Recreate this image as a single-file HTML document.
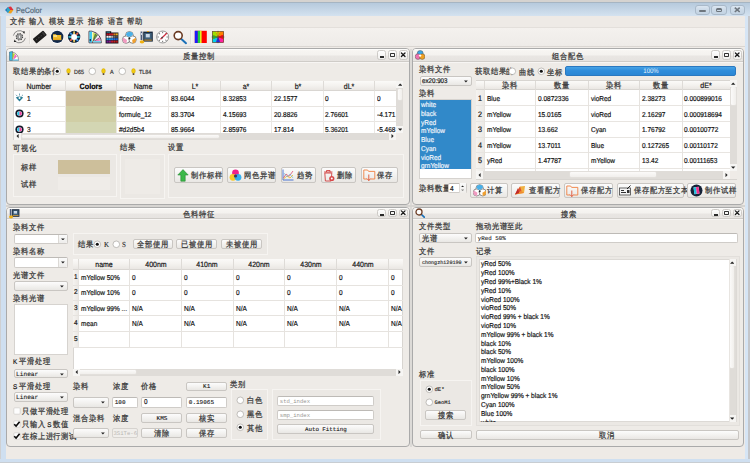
<!DOCTYPE html>
<html><head><meta charset="utf-8"><title>PeColor</title><style>
html,body{margin:0;padding:0;width:750px;height:463px;overflow:hidden;background:#eeeae6}
.a{position:absolute}
.t{white-space:nowrap;text-rendering:geometricPrecision;font-family:"Liberation Sans",sans-serif;-webkit-text-stroke:0.2px currentColor}
.c{font-size:8px;letter-spacing:0.65px;text-rendering:optimizeSpeed;-webkit-text-stroke:0.25px currentColor;color:#3a3a3a}
</style></head><body>
<div class="a " style="left:0px;top:0px;width:750px;height:463px;background:#eeeae6;"></div>
<div class="a " style="left:0px;top:0px;width:750px;height:1.5px;background:#d5d3d0;"></div>
<div class="a " style="left:0px;top:1.5px;width:750px;height:14.5px;background:linear-gradient(#b6cadd,#bfd1e2 30%,#d4e2f0);border-top:1px solid #a6b5c2;box-sizing:border-box;"></div>
<div class="a " style="left:0px;top:16px;width:1px;height:447px;background:#cfd0d2;"></div>
<div class="a " style="left:1px;top:16px;width:4.5px;height:447px;background:#cfdff0;"></div>
<div class="a " style="left:745px;top:16px;width:5px;height:447px;background:#d6e5f5;"></div>
<div class="a " style="left:748.3px;top:16px;width:1.7px;height:447px;background:#c4c6ca;"></div>
<div class="a " style="left:0px;top:459px;width:750px;height:4px;background:#cfdff0;"></div>
<div class="a " style="left:0px;top:462px;width:750px;height:1px;background:#c8cdd2;"></div>
<svg class="a" style="left:5px;top:6px" width="9" height="8" viewBox="0 0 9 8"><path d="M0 4 L3 1 L5 4 L3 7Z" fill="#1d6fb8"/><path d="M3 1 L6 0.5 L8.5 4 L5 4Z" fill="#e0303a"/><path d="M5 4 L8.5 4 L6 7.5 L3 7Z" fill="#f0a020"/><path d="M3 1 L5 4 L3 7 L1.5 4Z" fill="#2aa8c8"/></svg>
<div class="a t" style="left:15.5px;top:6.1px;line-height:10px;font-size:7.92px;color:#566a7a;transform:scaleX(0.9091);transform-origin:0 50%;">PeColor</div>
<div class="a " style="left:694.5px;top:4.8px;width:15.0px;height:10.0px;background:linear-gradient(#dbe6f1,#cbd9e7 50%,#c3d3e3);border:1px solid #a9b9c9;border-radius:3px;box-sizing:border-box;"></div>
<div class="a " style="left:711.3px;top:4.8px;width:15.4px;height:10.0px;background:linear-gradient(#dbe6f1,#cbd9e7 50%,#c3d3e3);border:1px solid #a9b9c9;border-radius:3px;box-sizing:border-box;"></div>
<div class="a " style="left:729.5px;top:4.8px;width:15.0px;height:10.0px;background:linear-gradient(#dbe6f1,#cbd9e7 50%,#c3d3e3);border:1px solid #a9b9c9;border-radius:3px;box-sizing:border-box;"></div>
<div class="a " style="left:699px;top:9.6px;width:6.5px;height:2.6px;background:#6e767e;border-radius:1.3px;"></div>
<div class="a " style="left:716px;top:7.6px;width:6.2px;height:4.8px;border:1px solid #6e767e;border-top-width:2px;box-sizing:border-box;border-radius:1.5px;"></div>
<svg class="a" style="left:733.8px;top:7.4px" width="6.5" height="5.6" viewBox="0 0 6.5 5.6"><path d="M0.8 0.6 L5.7 5 M5.7 0.6 L0.8 5" stroke="#6e767e" stroke-width="1.6"/></svg>
<div class="a " style="left:5.5px;top:16px;width:739.5px;height:10.5px;background:#eeeae6;"></div>
<div class="a t" style="left:9.5px;top:17.2px;line-height:10px;font-size:6.93px;color:#222;transform:scaleX(0.9091);transform-origin:0 50%;"><span class="c">文件</span></div>
<div class="a t" style="left:29px;top:17.2px;line-height:10px;font-size:6.93px;color:#222;transform:scaleX(0.9091);transform-origin:0 50%;"><span class="c">输入</span></div>
<div class="a t" style="left:48.5px;top:17.2px;line-height:10px;font-size:6.93px;color:#222;transform:scaleX(0.9091);transform-origin:0 50%;"><span class="c">模块</span></div>
<div class="a t" style="left:68px;top:17.2px;line-height:10px;font-size:6.93px;color:#222;transform:scaleX(0.9091);transform-origin:0 50%;"><span class="c">显示</span></div>
<div class="a t" style="left:88px;top:17.2px;line-height:10px;font-size:6.93px;color:#222;transform:scaleX(0.9091);transform-origin:0 50%;"><span class="c">指标</span></div>
<div class="a t" style="left:107.5px;top:17.2px;line-height:10px;font-size:6.93px;color:#222;transform:scaleX(0.9091);transform-origin:0 50%;"><span class="c">语言</span></div>
<div class="a t" style="left:127px;top:17.2px;line-height:10px;font-size:6.93px;color:#222;transform:scaleX(0.9091);transform-origin:0 50%;"><span class="c">帮助</span></div>
<div class="a " style="left:5.5px;top:26.5px;width:739.5px;height:20.0px;background:linear-gradient(#f4f1ee,#eeebe8);border-top:1px solid #e3dfdb;box-sizing:border-box;"></div>
<div class="a " style="left:5.5px;top:46px;width:739.5px;height:1px;background:#dad6d2;"></div>
<div class="a " style="left:5.5px;top:47px;width:739.5px;height:1px;background:#efebe7;"></div>
<svg class="a" style="left:0;top:0;overflow:hidden" width="230" height="48" viewBox="0 0 230 48"><defs><clipPath id="cw"><rect x="212.4" y="31.5" width="11.2" height="11"/></clipPath></defs><rect x="29" y="30" width="0.8" height="14" fill="#d6d2ce"/><rect x="29.8" y="30" width="0.8" height="14" fill="#fbfaf8"/><rect x="190.5" y="30" width="0.8" height="14" fill="#d6d2ce"/><rect x="191.3" y="30" width="0.8" height="14" fill="#fbfaf8"/><path d="M23.8 32.4 A6.2 6.2 0 0 0 13.4 35.6" fill="none" stroke="#707070" stroke-width="0.8"/><path d="M15 41.1 A6.2 6.2 0 0 0 25.4 37.9" fill="none" stroke="#707070" stroke-width="0.8"/><path d="M22.6 31.4 L25 31.6 L24.2 33.9Z" fill="#222"/><path d="M16.2 42.1 L13.8 41.9 L14.6 39.6Z" fill="#222"/><circle cx="19.4" cy="36.8" r="3.2" fill="#8a8a8a" stroke="#3a3a3a" stroke-width="1.1" stroke-dasharray="1.1 1.4"/><circle cx="19.4" cy="36.8" r="2.6" fill="#9a9a9a"/><rect x="19" y="35.6" width="1" height="2.4" fill="#e8e8e8"/><g transform="rotate(-40 39.8 37)"><rect x="33" y="34" width="13.6" height="6" rx="0.9" fill="#1e1e1e"/><rect x="35" y="36.6" width="1.2" height="0.8" fill="#555"/><rect x="38" y="36.6" width="1.2" height="0.8" fill="#555"/><rect x="41" y="36.6" width="1.2" height="0.8" fill="#555"/><rect x="44" y="35" width="1.6" height="4" fill="#3a3a3a"/></g><circle cx="57.2" cy="36.9" r="6.9" fill="#fff" opacity="0.85"/><circle cx="57.2" cy="36.9" r="6.2" fill="#13294a"/><path d="M53 34.2h2.8l0.8 0.9h4.6v5h-8.2z" fill="#f2bd2c"/><rect x="53.4" y="35.4" width="3.6" height="1.2" fill="#fff4c0"/><rect x="53" y="38.6" width="8.2" height="1.5" fill="#e8a820"/><circle cx="74.1" cy="36.9" r="6.9" fill="#fff" opacity="0.85"/><circle cx="74.1" cy="36.9" r="6.2" fill="#0f2540"/><path d="M73.1 33.9 L75.1 33.9 L74.8 31.2 L73.4 31.2Z" fill="#e8c860" transform="rotate(0 74.1 36.9)"/><path d="M73.1 33.9 L75.1 33.9 L74.8 31.2 L73.4 31.2Z" fill="#e86048" transform="rotate(45 74.1 36.9)"/><path d="M73.1 33.9 L75.1 33.9 L74.8 31.2 L73.4 31.2Z" fill="#40c8d8" transform="rotate(90 74.1 36.9)"/><path d="M73.1 33.9 L75.1 33.9 L74.8 31.2 L73.4 31.2Z" fill="#3a90e0" transform="rotate(135 74.1 36.9)"/><path d="M73.1 33.9 L75.1 33.9 L74.8 31.2 L73.4 31.2Z" fill="#e8c860" transform="rotate(180 74.1 36.9)"/><path d="M73.1 33.9 L75.1 33.9 L74.8 31.2 L73.4 31.2Z" fill="#e86048" transform="rotate(225 74.1 36.9)"/><path d="M73.1 33.9 L75.1 33.9 L74.8 31.2 L73.4 31.2Z" fill="#40c8d8" transform="rotate(270 74.1 36.9)"/><path d="M73.1 33.9 L75.1 33.9 L74.8 31.2 L73.4 31.2Z" fill="#3a90e0" transform="rotate(315 74.1 36.9)"/><circle cx="74.1" cy="36.9" r="3.0" fill="#fff"/><path d="M89 31.2 H92.2 L92.4 31.5 A11 11 0 0 1 101.3 42.8 H89Z" fill="#fff" stroke="#3a3040" stroke-width="0.9"/><rect x="89.4" y="31.6" width="2.6" height="10.8" fill="#40c8ee"/><rect x="89.6" y="39" width="1.4" height="2.2" fill="#1a3050"/><path d="M92.6 42.3 L92.6 32.2 L95.4 33.4Z" fill="#d8e860"/><path d="M92.6 42.3 L95.4 33.4 L97.6 35Z" fill="#60a030"/><path d="M92.6 42.3 L97.6 35 L99.5 37.6Z" fill="#f4f0f4"/><path d="M92.6 42.3 L99.5 37.6 L100.7 40.6Z" fill="#f080c0"/><path d="M92.6 42.3 L95.4 33.4 M92.6 42.3 L97.6 35 M92.6 42.3 L99.5 37.6" stroke="#2a2030" stroke-width="0.5"/><rect x="93" y="41" width="7.8" height="1.4" fill="#70d4f0"/><path d="M105.6 31.2h5.6v1.2h7.2v11.2h-12.8z" fill="#141420"/><rect x="106.6" y="31.8" width="3.4" height="0.8" fill="#30a0b0"/><rect x="106.5" y="33.4" width="2.1" height="2" fill="#c0141e"/><rect x="108.8" y="33.4" width="2.1" height="2" fill="#d01828"/><rect x="111.1" y="33.4" width="2.1" height="2" fill="#d8201e"/><rect x="113.4" y="33.4" width="2.1" height="2" fill="#e07a18"/><rect x="115.7" y="33.4" width="2.1" height="2" fill="#e8b020"/><rect x="106.5" y="35.8" width="2.1" height="2" fill="#f4f4f4"/><rect x="108.8" y="35.8" width="2.1" height="2" fill="#e8e8e8"/><rect x="111.1" y="35.8" width="2.1" height="2" fill="#b0b0b0"/><rect x="113.4" y="35.8" width="2.1" height="2" fill="#707070"/><rect x="115.7" y="35.8" width="2.1" height="2" fill="#505050"/><rect x="106.5" y="38.199999999999996" width="2.1" height="2" fill="#18a0d8"/><rect x="108.8" y="38.199999999999996" width="2.1" height="2" fill="#1890e0"/><rect x="111.1" y="38.199999999999996" width="2.1" height="2" fill="#2080e8"/><rect x="113.4" y="38.199999999999996" width="2.1" height="2" fill="#2070e0"/><rect x="115.7" y="38.199999999999996" width="2.1" height="2" fill="#1a60d0"/><rect x="106.5" y="40.599999999999994" width="2.1" height="2" fill="#701890"/><rect x="108.8" y="40.599999999999994" width="2.1" height="2" fill="#8a1a80"/><rect x="111.1" y="40.599999999999994" width="2.1" height="2" fill="#c01830"/><rect x="113.4" y="40.599999999999994" width="2.1" height="2" fill="#c82020"/><rect x="115.7" y="40.599999999999994" width="2.1" height="2" fill="#b01818"/><circle cx="129.4" cy="35.4" r="3.9" fill="#fff" stroke="#444" stroke-width="0.6"/><circle cx="126.1" cy="39.6" r="3.7" fill="#fff" stroke="#444" stroke-width="0.6"/><circle cx="132.6" cy="39.6" r="3.7" fill="#fff" stroke="#444" stroke-width="0.6"/><path d="M125.8 34.6 A3.9 3.9 0 0 1 133.2 34.2 L131 36.6 L128 36.8Z" fill="#4ab0e8"/><path d="M123.2 37.6 A3.7 3.7 0 0 0 126.4 43.3 L127 40 Z" fill="#f09ac0"/><path d="M135.6 37.8 A3.7 3.7 0 0 1 132.6 43.3 L132.2 40Z" fill="#f0a030"/><circle cx="129.4" cy="38.6" r="1" fill="#222"/><rect x="143.2" y="31.6" width="9.6" height="10" fill="#18283c"/><rect x="144.2" y="33" width="7.6" height="6.4" fill="#40607a"/><rect x="145.8" y="34" width="4" height="3.4" fill="#c8d8e8"/><rect x="144.2" y="39.6" width="7.6" height="1" fill="#d8a040"/><rect x="147" y="31" width="2" height="1" fill="#e0a020"/><rect x="140.6" y="31.5" width="1.8" height="8.5" fill="#4a5a7a"/><rect x="141" y="33" width="1" height="2" fill="#c8d8e8"/><ellipse cx="142" cy="41.8" rx="2.3" ry="1.6" fill="#f0b010"/><circle cx="162.7" cy="37" r="6" fill="#fff" stroke="#9a9a9a" stroke-width="1"/><rect x="162.3" y="31.8" width="0.8" height="1.4" fill="#555" transform="rotate(0 162.7 37)"/><rect x="162.3" y="31.8" width="0.8" height="1.4" fill="#555" transform="rotate(45 162.7 37)"/><rect x="162.3" y="31.8" width="0.8" height="1.4" fill="#555" transform="rotate(90 162.7 37)"/><rect x="162.3" y="31.8" width="0.8" height="1.4" fill="#555" transform="rotate(135 162.7 37)"/><rect x="162.3" y="31.8" width="0.8" height="1.4" fill="#555" transform="rotate(180 162.7 37)"/><rect x="162.3" y="31.8" width="0.8" height="1.4" fill="#555" transform="rotate(225 162.7 37)"/><rect x="162.3" y="31.8" width="0.8" height="1.4" fill="#555" transform="rotate(270 162.7 37)"/><rect x="162.3" y="31.8" width="0.8" height="1.4" fill="#555" transform="rotate(315 162.7 37)"/><path d="M160.5 39.2 L167 33" stroke="#d03040" stroke-width="1.2"/><circle cx="162.2" cy="37.6" r="0.9" fill="#444"/><path d="M180.8 38.6 L186 43.2" stroke="#1a70b8" stroke-width="2" stroke-linecap="round"/><circle cx="178.2" cy="35.6" r="4" fill="#fff" stroke="#6a3a22" stroke-width="1.6"/><rect x="194.8" y="30.8" width="12" height="12.2" fill="#f00"/><rect x="194.8" y="30.8" width="3" height="12.2" fill="#1a1aff"/><rect x="197.8" y="30.8" width="2.2" height="12.2" fill="#20d040"/><rect x="200" y="30.8" width="1.6" height="12.2" fill="#e0f020"/><rect x="212.4" y="31.5" width="11.2" height="11" fill="#e00"/><path clip-path="url(#cw)" d="M218 37 L213.41 25.91 L222.59 25.91Z" fill="#f0e000"/><path clip-path="url(#cw)" d="M218 37 L222.59 25.91 L229.09 32.41Z" fill="#ff8000"/><path clip-path="url(#cw)" d="M218 37 L229.09 32.41 L229.09 41.59Z" fill="#ff1010"/><path clip-path="url(#cw)" d="M218 37 L229.09 41.59 L222.59 48.09Z" fill="#ff20a0"/><path clip-path="url(#cw)" d="M218 37 L222.59 48.09 L213.41 48.09Z" fill="#2030ff"/><path clip-path="url(#cw)" d="M218 37 L213.41 48.09 L206.91 41.59Z" fill="#00d0f0"/><path clip-path="url(#cw)" d="M218 37 L206.91 41.59 L206.91 32.41Z" fill="#30d030"/><path clip-path="url(#cw)" d="M218 37 L206.91 32.41 L213.41 25.91Z" fill="#a0e000"/><rect x="212.4" y="31.5" width="11.2" height="11" fill="none" stroke="#553" stroke-width="0.6"/><path d="M211.6 37 H224.4 M218 30.8 V43.2" stroke="#333" stroke-width="0.5"/></svg>
<div class="a " style="left:410.3px;top:48.5px;width:1.5px;height:398.0px;background:#dcdad7;"></div>
<div class="a " style="left:6px;top:205.1px;width:738.5px;height:1.9px;background:#d6d4d1;"></div>
<div class="a " style="left:5.5px;top:48px;width:404.8px;height:157.1px;border:1px solid #aaaaaa;border-radius:4px;box-sizing:border-box;background:#eeebe7;"></div>
<div class="a " style="left:6.5px;top:49px;width:402.8px;height:12.8px;background:linear-gradient(#ffffff,#f7f5f2 12%,#f4f2ef 45%,#e9e6e3 55%,#e6e3e0);border-radius:3px 3px 0 0;"></div>
<div class="a " style="left:6.5px;top:61.0px;width:402.8px;height:1.0px;background:#cfccc8;"></div>
<div class="a " style="left:6.5px;top:62.0px;width:402.8px;height:1.0px;background:#f7f5f3;"></div>
<div class="a t" style="left:49px;width:300px;text-align:center;top:52.0px;line-height:10px;font-size:6.93px;color:#222;transform:scaleX(0.9091);transform-origin:50% 50%;"><span class="c">质量控制</span></div>
<div class="a " style="left:376.7px;top:49.5px;width:9.4px;height:10.3px;background:linear-gradient(#fdfdfd,#f1f0ee);border:1px solid #cdcac6;border-radius:2.5px;box-sizing:border-box;"></div>
<div class="a " style="left:387.6px;top:49.5px;width:9.4px;height:10.3px;background:linear-gradient(#fdfdfd,#f1f0ee);border:1px solid #cdcac6;border-radius:2.5px;box-sizing:border-box;"></div>
<div class="a " style="left:398.5px;top:49.5px;width:9.4px;height:10.3px;background:linear-gradient(#fdfdfd,#f1f0ee);border:1px solid #cdcac6;border-radius:2.5px;box-sizing:border-box;"></div>
<div class="a " style="left:379.6px;top:56.35px;width:4.1px;height:1.5px;background:#2a2a2a;"></div>
<div class="a " style="left:389.8px;top:53.05px;width:5.0px;height:3.8px;border:1px solid #333;border-top-width:1.9px;box-sizing:border-box;border-radius:0.8px;"></div>
<svg class="a" style="left:400px;top:52px" width="6" height="6" viewBox="0 0 6 6"><path d="M1.40 0.95L5.00 4.55M5.00 0.95L1.40 4.55" stroke="#1a1a1a" stroke-width="1.3" stroke-linecap="round"/></svg>
<div class="a " style="left:411.8px;top:48px;width:332.5px;height:157.1px;border:1px solid #aaaaaa;border-radius:4px;box-sizing:border-box;background:#eeebe7;"></div>
<div class="a " style="left:412.8px;top:49px;width:330.5px;height:12.8px;background:linear-gradient(#ffffff,#f7f5f2 12%,#f4f2ef 45%,#e9e6e3 55%,#e6e3e0);border-radius:3px 3px 0 0;"></div>
<div class="a " style="left:412.8px;top:61.0px;width:330.5px;height:1.0px;background:#cfccc8;"></div>
<div class="a " style="left:412.8px;top:62.0px;width:330.5px;height:1.0px;background:#f7f5f3;"></div>
<div class="a t" style="left:418.3px;width:300px;text-align:center;top:52.0px;line-height:10px;font-size:6.93px;color:#222;transform:scaleX(0.9091);transform-origin:50% 50%;"><span class="c">组合配色</span></div>
<div class="a " style="left:710.7px;top:49.5px;width:9.4px;height:10.3px;background:linear-gradient(#fdfdfd,#f1f0ee);border:1px solid #cdcac6;border-radius:2.5px;box-sizing:border-box;"></div>
<div class="a " style="left:721.6px;top:49.5px;width:9.4px;height:10.3px;background:linear-gradient(#fdfdfd,#f1f0ee);border:1px solid #cdcac6;border-radius:2.5px;box-sizing:border-box;"></div>
<div class="a " style="left:732.5px;top:49.5px;width:9.4px;height:10.3px;background:linear-gradient(#fdfdfd,#f1f0ee);border:1px solid #cdcac6;border-radius:2.5px;box-sizing:border-box;"></div>
<div class="a " style="left:713.6px;top:56.35px;width:4.1px;height:1.5px;background:#2a2a2a;"></div>
<div class="a " style="left:723.8px;top:53.05px;width:5.0px;height:3.8px;border:1px solid #333;border-top-width:1.9px;box-sizing:border-box;border-radius:0.8px;"></div>
<svg class="a" style="left:734px;top:52px" width="6" height="6" viewBox="0 0 6 6"><path d="M1.40 0.95L5.00 4.55M5.00 0.95L1.40 4.55" stroke="#1a1a1a" stroke-width="1.3" stroke-linecap="round"/></svg>
<div class="a " style="left:5.5px;top:207px;width:404.8px;height:240px;border:1px solid #aaaaaa;border-radius:4px;box-sizing:border-box;background:#eeebe7;"></div>
<div class="a " style="left:6.5px;top:208px;width:402.8px;height:10.6px;background:linear-gradient(#ffffff,#f7f5f2 12%,#f4f2ef 45%,#e9e6e3 55%,#e6e3e0);border-radius:3px 3px 0 0;"></div>
<div class="a " style="left:6.5px;top:217.8px;width:402.8px;height:1.0px;background:#cfccc8;"></div>
<div class="a " style="left:6.5px;top:218.8px;width:402.8px;height:1.0px;background:#f7f5f3;"></div>
<div class="a t" style="left:48.5px;width:300px;text-align:center;top:209.9px;line-height:10px;font-size:6.93px;color:#222;transform:scaleX(0.9091);transform-origin:50% 50%;"><span class="c">色料特征</span></div>
<div class="a " style="left:376.7px;top:208.5px;width:9.4px;height:8.1px;background:linear-gradient(#fdfdfd,#f1f0ee);border:1px solid #cdcac6;border-radius:2.5px;box-sizing:border-box;"></div>
<div class="a " style="left:387.6px;top:208.5px;width:9.4px;height:8.1px;background:linear-gradient(#fdfdfd,#f1f0ee);border:1px solid #cdcac6;border-radius:2.5px;box-sizing:border-box;"></div>
<div class="a " style="left:398.5px;top:208.5px;width:9.4px;height:8.1px;background:linear-gradient(#fdfdfd,#f1f0ee);border:1px solid #cdcac6;border-radius:2.5px;box-sizing:border-box;"></div>
<div class="a " style="left:379.6px;top:214.25px;width:4.1px;height:1.5px;background:#2a2a2a;"></div>
<div class="a " style="left:389.8px;top:210.95px;width:5.0px;height:3.8px;border:1px solid #333;border-top-width:1.9px;box-sizing:border-box;border-radius:0.8px;"></div>
<svg class="a" style="left:400px;top:210px" width="6" height="6" viewBox="0 0 6 6"><path d="M1.40 0.85L5.00 4.45M5.00 0.85L1.40 4.45" stroke="#1a1a1a" stroke-width="1.3" stroke-linecap="round"/></svg>
<div class="a " style="left:411.8px;top:207px;width:332.5px;height:240px;border:1px solid #aaaaaa;border-radius:4px;box-sizing:border-box;background:#eeebe7;"></div>
<div class="a " style="left:412.8px;top:208px;width:330.5px;height:10.6px;background:linear-gradient(#ffffff,#f7f5f2 12%,#f4f2ef 45%,#e9e6e3 55%,#e6e3e0);border-radius:3px 3px 0 0;"></div>
<div class="a " style="left:412.8px;top:217.8px;width:330.5px;height:1.0px;background:#cfccc8;"></div>
<div class="a " style="left:412.8px;top:218.8px;width:330.5px;height:1.0px;background:#f7f5f3;"></div>
<div class="a t" style="left:419px;width:300px;text-align:center;top:209.9px;line-height:10px;font-size:6.93px;color:#222;transform:scaleX(0.9091);transform-origin:50% 50%;"><span class="c">搜索</span></div>
<div class="a " style="left:710.7px;top:208.5px;width:9.4px;height:8.1px;background:linear-gradient(#fdfdfd,#f1f0ee);border:1px solid #cdcac6;border-radius:2.5px;box-sizing:border-box;"></div>
<div class="a " style="left:721.6px;top:208.5px;width:9.4px;height:8.1px;background:linear-gradient(#fdfdfd,#f1f0ee);border:1px solid #cdcac6;border-radius:2.5px;box-sizing:border-box;"></div>
<div class="a " style="left:732.5px;top:208.5px;width:9.4px;height:8.1px;background:linear-gradient(#fdfdfd,#f1f0ee);border:1px solid #cdcac6;border-radius:2.5px;box-sizing:border-box;"></div>
<div class="a " style="left:713.6px;top:214.25px;width:4.1px;height:1.5px;background:#2a2a2a;"></div>
<div class="a " style="left:723.8px;top:210.95px;width:5.0px;height:3.8px;border:1px solid #333;border-top-width:1.9px;box-sizing:border-box;border-radius:0.8px;"></div>
<svg class="a" style="left:734px;top:210px" width="6" height="6" viewBox="0 0 6 6"><path d="M1.40 0.85L5.00 4.45M5.00 0.85L1.40 4.45" stroke="#1a1a1a" stroke-width="1.3" stroke-linecap="round"/></svg>
<div class="a t" style="left:13px;top:67.4px;line-height:10px;font-size:6.93px;color:#151515;transform:scaleX(0.9091);transform-origin:0 50%;"><span class="c">取结果的条件</span></div>
<svg class="a" style="left:52.7px;top:67.3px" width="8.6" height="8.6" viewBox="0 0 8.6 8.6"><defs><linearGradient id="rg" x1="0" y1="0" x2="0" y2="1"><stop offset="0" stop-color="#e8e8e8"/><stop offset="1" stop-color="#ffffff"/></linearGradient></defs><circle cx="4.3" cy="4.3" r="3.3" fill="#fff" stroke="#a9a6a2" stroke-width="0.7"/><circle cx="4.3" cy="4.3" r="1.55" fill="#111"/></svg>
<svg class="a" style="left:65.8px;top:68.0px" width="5" height="8" viewBox="0 0 5 8"><ellipse cx="2.5" cy="3" rx="1.9" ry="2.4" fill="#f2cc10" stroke="#c89a10" stroke-width="0.4"/><rect x="1.7" y="5.2" width="1.6" height="1.8" fill="#5a4a30"/></svg>
<div class="a t" style="left:74px;top:67.7px;line-height:10px;font-size:5.94px;color:#333;transform:scaleX(0.9091);transform-origin:0 50%;">D65</div>
<svg class="a" style="left:87.9px;top:67.3px" width="8.6" height="8.6" viewBox="0 0 8.6 8.6"><defs><linearGradient id="rg" x1="0" y1="0" x2="0" y2="1"><stop offset="0" stop-color="#e8e8e8"/><stop offset="1" stop-color="#ffffff"/></linearGradient></defs><circle cx="4.3" cy="4.3" r="3.3" fill="#fff" stroke="#a9a6a2" stroke-width="0.7"/></svg>
<svg class="a" style="left:100.8px;top:68.0px" width="5" height="8" viewBox="0 0 5 8"><ellipse cx="2.5" cy="3" rx="1.9" ry="2.4" fill="#f2cc10" stroke="#c89a10" stroke-width="0.4"/><rect x="1.7" y="5.2" width="1.6" height="1.8" fill="#5a4a30"/></svg>
<div class="a t" style="left:109.8px;top:67.7px;line-height:10px;font-size:5.94px;color:#333;transform:scaleX(0.9091);transform-origin:0 50%;">A</div>
<svg class="a" style="left:117.7px;top:67.3px" width="8.6" height="8.6" viewBox="0 0 8.6 8.6"><defs><linearGradient id="rg" x1="0" y1="0" x2="0" y2="1"><stop offset="0" stop-color="#e8e8e8"/><stop offset="1" stop-color="#ffffff"/></linearGradient></defs><circle cx="4.3" cy="4.3" r="3.3" fill="#fff" stroke="#a9a6a2" stroke-width="0.7"/></svg>
<svg class="a" style="left:130.8px;top:68.0px" width="5" height="8" viewBox="0 0 5 8"><ellipse cx="2.5" cy="3" rx="1.9" ry="2.4" fill="#f2cc10" stroke="#c89a10" stroke-width="0.4"/><rect x="1.7" y="5.2" width="1.6" height="1.8" fill="#5a4a30"/></svg>
<div class="a t" style="left:139px;top:67.7px;line-height:10px;font-size:5.94px;color:#333;transform:scaleX(0.9091);transform-origin:0 50%;">TL84</div>
<div class="a " style="left:13.4px;top:80.5px;width:390.1px;height:59.5px;background:#fff;border:1px solid #d8d5d1;box-sizing:border-box;"></div>
<div class="a " style="left:13.9px;top:81.0px;width:382.5px;height:9.5px;background:linear-gradient(#fbfaf8,#f4f2ef 50%,#eae7e3);border-bottom:1px solid #d9d6d2;box-sizing:border-box;"></div>
<div class="a " style="left:64.8px;top:81.0px;width:0.8px;height:9.5px;background:#dedbd7;"></div>
<div class="a " style="left:116.0px;top:81.0px;width:0.8px;height:9.5px;background:#dedbd7;"></div>
<div class="a " style="left:168.2px;top:81.0px;width:0.8px;height:9.5px;background:#dedbd7;"></div>
<div class="a " style="left:220.2px;top:81.0px;width:0.8px;height:9.5px;background:#dedbd7;"></div>
<div class="a " style="left:271.4px;top:81.0px;width:0.8px;height:9.5px;background:#dedbd7;"></div>
<div class="a " style="left:322.8px;top:81.0px;width:0.8px;height:9.5px;background:#dedbd7;"></div>
<div class="a " style="left:374.3px;top:81.0px;width:0.8px;height:9.5px;background:#dedbd7;"></div>
<div class="a t" style="left:-110.65px;width:300px;text-align:center;top:81.5px;line-height:10px;font-size:7.7px;color:#1a1a1a;transform:scaleX(0.9091);transform-origin:50% 50%;">Number</div>
<div class="a t" style="left:-59.1px;width:300px;text-align:center;top:81.5px;line-height:10px;font-size:7.92px;color:#000;font-weight:bold;transform:scaleX(0.9091);transform-origin:50% 50%;">Colors</div>
<div class="a t" style="left:-7.4px;width:300px;text-align:center;top:81.5px;line-height:10px;font-size:7.7px;color:#1a1a1a;transform:scaleX(0.9091);transform-origin:50% 50%;">Name</div>
<div class="a t" style="left:44.7px;width:300px;text-align:center;top:81.5px;line-height:10px;font-size:7.7px;color:#1a1a1a;transform:scaleX(0.9091);transform-origin:50% 50%;">L*</div>
<div class="a t" style="left:96.3px;width:300px;text-align:center;top:81.5px;line-height:10px;font-size:7.7px;color:#1a1a1a;transform:scaleX(0.9091);transform-origin:50% 50%;">a*</div>
<div class="a t" style="left:147.6px;width:300px;text-align:center;top:81.5px;line-height:10px;font-size:7.7px;color:#1a1a1a;transform:scaleX(0.9091);transform-origin:50% 50%;">b*</div>
<div class="a t" style="left:199.05px;width:300px;text-align:center;top:81.5px;line-height:10px;font-size:7.7px;color:#1a1a1a;transform:scaleX(0.9091);transform-origin:50% 50%;">dL*</div>
<div class="a " style="left:13.9px;top:105.6px;width:382.5px;height:0.8px;background:#e8e5e1;"></div>
<div class="a " style="left:13.9px;top:121.2px;width:382.5px;height:0.8px;background:#e8e5e1;"></div>
<div class="a " style="left:64.8px;top:90.5px;width:0.8px;height:42.8px;background:#ebe8e4;"></div>
<div class="a " style="left:116.0px;top:90.5px;width:0.8px;height:42.8px;background:#ebe8e4;"></div>
<div class="a " style="left:168.2px;top:90.5px;width:0.8px;height:42.8px;background:#ebe8e4;"></div>
<div class="a " style="left:220.2px;top:90.5px;width:0.8px;height:42.8px;background:#ebe8e4;"></div>
<div class="a " style="left:271.4px;top:90.5px;width:0.8px;height:42.8px;background:#ebe8e4;"></div>
<div class="a " style="left:322.8px;top:90.5px;width:0.8px;height:42.8px;background:#ebe8e4;"></div>
<div class="a " style="left:374.3px;top:90.5px;width:0.8px;height:42.8px;background:#ebe8e4;"></div>
<div class="a " style="left:65.8px;top:90.5px;width:50.7px;height:15.7px;background:#cdbf9b;"></div>
<div class="a t" style="left:27px;top:94.15px;line-height:10px;font-size:7.26px;color:#151515;transform:scaleX(0.9091);transform-origin:0 50%;">1</div>
<div class="a t" style="left:118.7px;top:94.15px;line-height:10px;font-size:7.15px;color:#151515;transform:scaleX(0.9091);transform-origin:0 50%;">#cec09c</div>
<div class="a t" style="left:170.8px;top:94.15px;line-height:10px;font-size:7.15px;color:#151515;transform:scaleX(0.9091);transform-origin:0 50%;">83.6044</div>
<div class="a t" style="left:222.8px;top:94.15px;line-height:10px;font-size:7.15px;color:#151515;transform:scaleX(0.9091);transform-origin:0 50%;">8.32853</div>
<div class="a t" style="left:274.0px;top:94.15px;line-height:10px;font-size:7.15px;color:#151515;transform:scaleX(0.9091);transform-origin:0 50%;">22.1577</div>
<div class="a t" style="left:325.4px;top:94.15px;line-height:10px;font-size:7.15px;color:#151515;transform:scaleX(0.9091);transform-origin:0 50%;">0</div>
<div class="a t" style="left:376.9px;top:94.15px;width:21.56px;overflow:hidden;line-height:10px;font-size:7.15px;color:#151515;transform:scaleX(0.9091);transform-origin:0 50%;">0</div>
<div class="a " style="left:65.8px;top:106.2px;width:50.7px;height:15.6px;background:#d0cea5;"></div>
<div class="a t" style="left:27px;top:109.7px;line-height:10px;font-size:7.26px;color:#151515;transform:scaleX(0.9091);transform-origin:0 50%;">2</div>
<div class="a t" style="left:118.7px;top:109.7px;line-height:10px;font-size:7.15px;color:#151515;transform:scaleX(0.9091);transform-origin:0 50%;">formule_12</div>
<div class="a t" style="left:170.8px;top:109.7px;line-height:10px;font-size:7.15px;color:#151515;transform:scaleX(0.9091);transform-origin:0 50%;">83.3704</div>
<div class="a t" style="left:222.8px;top:109.7px;line-height:10px;font-size:7.15px;color:#151515;transform:scaleX(0.9091);transform-origin:0 50%;">4.15693</div>
<div class="a t" style="left:274.0px;top:109.7px;line-height:10px;font-size:7.15px;color:#151515;transform:scaleX(0.9091);transform-origin:0 50%;">20.8826</div>
<div class="a t" style="left:325.4px;top:109.7px;line-height:10px;font-size:7.15px;color:#151515;transform:scaleX(0.9091);transform-origin:0 50%;">2.76601</div>
<div class="a t" style="left:376.9px;top:109.7px;width:21.56px;overflow:hidden;line-height:10px;font-size:7.15px;color:#151515;transform:scaleX(0.9091);transform-origin:0 50%;">-4.171</div>
<div class="a " style="left:65.8px;top:121.8px;width:50.7px;height:11.5px;background:#d3d6b3;"></div>
<div class="a t" style="left:27px;top:125.3px;line-height:10px;font-size:7.26px;color:#151515;transform:scaleX(0.9091);transform-origin:0 50%;">3</div>
<div class="a t" style="left:118.7px;top:125.3px;line-height:10px;font-size:7.15px;color:#151515;transform:scaleX(0.9091);transform-origin:0 50%;">#d2d5b4</div>
<div class="a t" style="left:170.8px;top:125.3px;line-height:10px;font-size:7.15px;color:#151515;transform:scaleX(0.9091);transform-origin:0 50%;">85.9664</div>
<div class="a t" style="left:222.8px;top:125.3px;line-height:10px;font-size:7.15px;color:#151515;transform:scaleX(0.9091);transform-origin:0 50%;">2.85976</div>
<div class="a t" style="left:274.0px;top:125.3px;line-height:10px;font-size:7.15px;color:#151515;transform:scaleX(0.9091);transform-origin:0 50%;">17.814</div>
<div class="a t" style="left:325.4px;top:125.3px;line-height:10px;font-size:7.15px;color:#151515;transform:scaleX(0.9091);transform-origin:0 50%;">5.36201</div>
<div class="a t" style="left:376.9px;top:125.3px;width:21.56px;overflow:hidden;line-height:10px;font-size:7.15px;color:#151515;transform:scaleX(0.9091);transform-origin:0 50%;">-5.468</div>
<svg class="a" style="left:15px;top:93px" width="9" height="10" viewBox="0 0 9 10"><path d="M4.5 0.5 V2.5 M1 1.8 L2.4 3.2 M8 1.8 L6.6 3.2" stroke="#3a7a90" stroke-width="0.7"/><path d="M0.8 4.6 Q4.5 2.4 8.2 4.6 L4.5 8.6Z" fill="#2a7d96"/><circle cx="4.5" cy="4.9" r="1" fill="#fff"/></svg>
<svg class="a" style="left:15px;top:109.3px" width="9" height="9" viewBox="0 0 9 9"><circle cx="4.5" cy="4.5" r="4.1" fill="#151b2a"/><path d="M2.2 3 Q4.5 1.4 6.8 3 L6.8 6 Q4.5 7.6 2.2 6Z" fill="#fff"/><path d="M2.4 3.2 L4.5 2.4 L4.5 6.6 L2.4 5.8Z" fill="#20c8e8"/><path d="M4.5 2.4 L6.6 3.2 L6.6 5.8 L4.5 6.6Z" fill="#f040a0"/></svg>
<svg class="a" style="left:15px;top:124.9px" width="9" height="9" viewBox="0 0 9 9"><circle cx="4.5" cy="4.5" r="4.1" fill="#151b2a"/><path d="M2.2 3 Q4.5 1.4 6.8 3 L6.8 6 Q4.5 7.6 2.2 6Z" fill="#fff"/><path d="M2.4 3.2 L4.5 2.4 L4.5 6.6 L2.4 5.8Z" fill="#20c8e8"/><path d="M4.5 2.4 L6.6 3.2 L6.6 5.8 L4.5 6.6Z" fill="#f040a0"/></svg>
<div class="a " style="left:396.4px;top:80.5px;width:6.9px;height:52.8px;background:#dfdcd8;"></div>
<div class="a " style="left:396.7px;top:87.5px;width:6.3px;height:13.5px;background:linear-gradient(90deg,#fbfaf9,#f1efec);border:1px solid #e2dfdb;border-radius:2px;box-sizing:border-box;"></div>
<div class="a " style="left:396.4px;top:80.5px;width:6.9px;height:7.0px;background:#f6f5f3;"></div>
<div class="a " style="left:396.4px;top:126.3px;width:6.9px;height:7.0px;background:#f6f5f3;"></div>
<svg class="a" style="left:397.65px;top:82.5px" width="4.4" height="3.2" viewBox="0 0 4.4 3.2"><path d="M0 2.7 L4.4 2.7 L2.2 0.5Z" fill="#222"/></svg>
<svg class="a" style="left:397.65px;top:128.1px" width="4.4" height="3.2" viewBox="0 0 4.4 3.2"><path d="M0 0.5 L4.4 0.5 L2.2 2.7Z" fill="#222"/></svg>
<div class="a " style="left:13.9px;top:133.3px;width:382.5px;height:6.3px;background:#dfdcd8;"></div>
<div class="a " style="left:20.5px;top:133.6px;width:199.1px;height:5.7px;background:linear-gradient(#fbfaf9,#f1efec);border:1px solid #e2dfdb;border-radius:2px;box-sizing:border-box;"></div>
<div class="a " style="left:13.9px;top:133.3px;width:7.0px;height:6.3px;background:#f6f5f3;"></div>
<div class="a " style="left:389.4px;top:133.3px;width:7.0px;height:6.3px;background:#f6f5f3;"></div>
<svg class="a" style="left:15.95px;top:134.35px" width="3.1" height="4.2" viewBox="0 0 3.1 4.2"><path d="M2.6 0 L2.6 4.2 L0.5 2.1Z" fill="#222"/></svg>
<svg class="a" style="left:391.25px;top:134.35px" width="3.1" height="4.2" viewBox="0 0 3.1 4.2"><path d="M0.5 0 L0.5 4.2 L2.6 2.1Z" fill="#222"/></svg>
<div class="a " style="left:396.4px;top:133.3px;width:6.9px;height:6.3px;background:#efebe7;"></div>
<div class="a t" style="left:13px;top:144.3px;line-height:10px;font-size:6.93px;color:#151515;transform:scaleX(0.9091);transform-origin:0 50%;"><span class="c">可视化</span></div>
<div class="a " style="left:13px;top:154px;width:104px;height:42.7px;background:#ebe8e4;border:1px solid #f6f4f1;box-sizing:border-box;"></div>
<div class="a t" style="left:20.5px;top:163.2px;line-height:10px;font-size:6.93px;color:#151515;transform:scaleX(0.9091);transform-origin:0 50%;"><span class="c">标样</span></div>
<div class="a t" style="left:20.5px;top:179.9px;line-height:10px;font-size:6.93px;color:#151515;transform:scaleX(0.9091);transform-origin:0 50%;"><span class="c">试样</span></div>
<div class="a " style="left:58px;top:160px;width:52.3px;height:14px;background:#cdbf9b;"></div>
<div class="a " style="left:58px;top:176.5px;width:52.3px;height:13.5px;background:#efece8;"></div>
<div class="a t" style="left:119.5px;top:143.4px;line-height:10px;font-size:6.93px;color:#151515;transform:scaleX(0.9091);transform-origin:0 50%;"><span class="c">结果</span></div>
<div class="a " style="left:119.5px;top:153.5px;width:45.5px;height:45.5px;background:#ebe8e4;border:1px solid #f6f4f1;box-sizing:border-box;"></div>
<div class="a " style="left:125px;top:159px;width:35px;height:35px;background:#eeebe7;"></div>
<div class="a t" style="left:167.5px;top:143.4px;line-height:10px;font-size:6.93px;color:#151515;transform:scaleX(0.9091);transform-origin:0 50%;"><span class="c">设置</span></div>
<div class="a " style="left:167.8px;top:153.9px;width:236.2px;height:44.1px;background:#ebe8e4;border:1px solid #f6f4f1;box-sizing:border-box;"></div>
<div class="a " style="left:174.2px;top:167.4px;width:49.1px;height:15.6px;background:linear-gradient(#fcfcfc,#f3f2f0 50%,#e9e7e4);border:1px solid #c9c6c2;border-radius:2px;box-sizing:border-box;"></div>
<div class="a t" style="left:190.8px;top:171.3px;line-height:10px;font-size:6.93px;color:#151515;transform:scaleX(0.9091);transform-origin:0 50%;"><span class="c">制作标样</span></div>
<div class="a " style="left:227.2px;top:167.4px;width:48.9px;height:15.6px;background:linear-gradient(#fcfcfc,#f3f2f0 50%,#e9e7e4);border:1px solid #c9c6c2;border-radius:2px;box-sizing:border-box;"></div>
<div class="a t" style="left:243.8px;top:171.3px;line-height:10px;font-size:6.93px;color:#151515;transform:scaleX(0.9091);transform-origin:0 50%;"><span class="c">网色异谱</span></div>
<div class="a " style="left:280.5px;top:167.4px;width:35.9px;height:15.6px;background:linear-gradient(#fcfcfc,#f3f2f0 50%,#e9e7e4);border:1px solid #c9c6c2;border-radius:2px;box-sizing:border-box;"></div>
<div class="a t" style="left:297.1px;top:171.3px;line-height:10px;font-size:6.93px;color:#151515;transform:scaleX(0.9091);transform-origin:0 50%;"><span class="c">趋势</span></div>
<div class="a " style="left:320.7px;top:167.4px;width:35.6px;height:15.6px;background:linear-gradient(#fcfcfc,#f3f2f0 50%,#e9e7e4);border:1px solid #c9c6c2;border-radius:2px;box-sizing:border-box;"></div>
<div class="a t" style="left:337.3px;top:171.3px;line-height:10px;font-size:6.93px;color:#151515;transform:scaleX(0.9091);transform-origin:0 50%;"><span class="c">删除</span></div>
<div class="a " style="left:360.6px;top:167.4px;width:37.2px;height:15.6px;background:linear-gradient(#fcfcfc,#f3f2f0 50%,#e9e7e4);border:1px solid #c9c6c2;border-radius:2px;box-sizing:border-box;"></div>
<div class="a t" style="left:377.2px;top:171.3px;line-height:10px;font-size:6.93px;color:#151515;transform:scaleX(0.9091);transform-origin:0 50%;"><span class="c">保存</span></div>
<svg class="a" style="left:176.5px;top:168.5px" width="12" height="13" viewBox="0 0 12 13"><path d="M6 0.6 L11.2 6 L8.2 6 L8.2 12.2 L3.8 12.2 L3.8 6 L0.8 6Z" fill="#3cb84a" stroke="#2a8a34" stroke-width="0.6"/></svg>
<svg class="a" style="left:228.7px;top:168.5px" width="13" height="13" viewBox="0 0 13 13"><circle cx="6.5" cy="4" r="3.4" fill="#f0208a"/><circle cx="4" cy="8.3" r="3.4" fill="#f8c820" opacity="0.95"/><circle cx="9" cy="8.3" r="3.4" fill="#20a8f0" opacity="0.9"/><circle cx="6.5" cy="7" r="1.6" fill="#3a3a5a"/></svg>
<svg class="a" style="left:282px;top:168.8px" width="12" height="12" viewBox="0 0 12 12"><path d="M1 0.5 V11 H11.5" stroke="#3a6ad0" stroke-width="0.9" fill="none"/><path d="M1.5 9 L4 5 L7 7.5 L11 2" stroke="#e04a6a" stroke-width="0.8" fill="none"/><path d="M1.5 10 L5 7 L8 9 L11 6" stroke="#f0c030" stroke-width="0.9" fill="none"/><path d="M2 4 L5 8 L8 5 L11 9" stroke="#60b0e0" stroke-width="0.6" fill="none"/></svg>
<svg class="a" style="left:322.5px;top:168.5px" width="12" height="13" viewBox="0 0 12 13"><path d="M1 3 H9.5 M3.5 3 V1.5 H7 V3" stroke="#d04040" stroke-width="0.9" fill="none"/><path d="M1.8 4 H8.8 L8.2 12 H2.4Z" fill="none" stroke="#d04040" stroke-width="0.9"/><circle cx="8.8" cy="9.5" r="2.6" fill="#d84848"/><circle cx="8.8" cy="9.5" r="1" fill="#fff"/></svg>
<svg class="a" style="left:362.5px;top:168.8px" width="13" height="12" viewBox="0 0 13 12"><path d="M0.8 1 H4.6 L5.6 2.4 H11.8 V10 H7.5" fill="none" stroke="#f08040" stroke-width="0.9"/><path d="M0.8 1 V10 H4" fill="none" stroke="#f08040" stroke-width="0.9"/><path d="M5.8 5.5 V11.5 M4 9.6 L5.8 11.6 L7.6 9.6" stroke="#e05030" stroke-width="0.9" fill="none"/></svg>
<svg class="a" style="left:9px;top:50.5px" width="10" height="10" viewBox="0 0 10 10"><path d="M0.5 9.5 V1 L3.5 0.5 L3.5 9.5Z" fill="#35c0e0" stroke="#2a5070" stroke-width="0.5"/><path d="M3.5 9.5 V1 A8.5 8.5 0 0 1 9.5 9.5Z" fill="#fff" stroke="#444" stroke-width="0.5"/><path d="M3.6 9.4 L3.8 2 L6 3Z" fill="#b0e030"/><path d="M3.6 9.4 L6 3 L8 5.5Z" fill="#f070c0"/><rect x="3.5" y="8.4" width="6" height="1.2" fill="#60c8f0"/></svg>
<svg class="a" style="left:414.8px;top:50.4px" width="10" height="10" viewBox="0 0 10 10"><circle cx="5.2" cy="3.5" r="3" fill="#3aa8e8" stroke="#555" stroke-width="0.5"/><circle cx="3" cy="6.6" r="2.8" fill="#f070b0" stroke="#555" stroke-width="0.5"/><circle cx="7.2" cy="6.6" r="2.8" fill="#f0a020" stroke="#555" stroke-width="0.5"/><circle cx="5.1" cy="5.6" r="1.2" fill="#fff"/></svg>
<div class="a t" style="left:419px;top:65.2px;line-height:10px;font-size:6.93px;color:#151515;transform:scaleX(0.9091);transform-origin:0 50%;"><span class="c">染料文件</span></div>
<div class="a " style="left:419.5px;top:75.7px;width:52.2px;height:10.7px;background:linear-gradient(#fcfcfc,#f3f2f0 50%,#e9e7e4);border:1px solid #c9c6c2;border-radius:2px;box-sizing:border-box;"></div>
<svg class="a" style="left:463.8px;top:79.9px" width="3.8" height="2.9" viewBox="0 0 3.8 2.9"><path d="M0 0.5 L3.8 0.5 L1.9 2.4Z" fill="#222"/></svg>
<div class="a t" style="left:422.0px;top:76.95px;line-height:10px;font-size:6.82px;color:#202020;transform:scaleX(0.9091);transform-origin:0 50%;">ex20:903</div>
<div class="a t" style="left:419px;top:88.9px;line-height:10px;font-size:6.93px;color:#151515;transform:scaleX(0.9091);transform-origin:0 50%;"><span class="c">染料</span></div>
<div class="a " style="left:418.8px;top:99.2px;width:53.0px;height:79.8px;background:#fff;border:1px solid #d6d3cf;box-sizing:border-box;"></div>
<div class="a " style="left:419.6px;top:99.8px;width:51.4px;height:69.2px;background:#3189c9;"></div>
<div class="a t" style="left:421.3px;top:100.0px;line-height:10px;font-size:7.15px;color:#eef4fa;transform:scaleX(0.9091);transform-origin:0 50%;">white</div>
<div class="a t" style="left:421.3px;top:108.75px;line-height:10px;font-size:7.15px;color:#eef4fa;transform:scaleX(0.9091);transform-origin:0 50%;">black</div>
<div class="a t" style="left:421.3px;top:117.5px;line-height:10px;font-size:7.15px;color:#eef4fa;transform:scaleX(0.9091);transform-origin:0 50%;">yRed</div>
<div class="a t" style="left:421.3px;top:126.25px;line-height:10px;font-size:7.15px;color:#eef4fa;transform:scaleX(0.9091);transform-origin:0 50%;">mYellow</div>
<div class="a t" style="left:421.3px;top:135.0px;line-height:10px;font-size:7.15px;color:#eef4fa;transform:scaleX(0.9091);transform-origin:0 50%;">Blue</div>
<div class="a t" style="left:421.3px;top:143.75px;line-height:10px;font-size:7.15px;color:#eef4fa;transform:scaleX(0.9091);transform-origin:0 50%;">Cyan</div>
<div class="a t" style="left:421.3px;top:152.5px;line-height:10px;font-size:7.15px;color:#eef4fa;transform:scaleX(0.9091);transform-origin:0 50%;">vioRed</div>
<div class="a t" style="left:421.3px;top:161.25px;line-height:10px;font-size:7.15px;color:#eef4fa;transform:scaleX(0.9091);transform-origin:0 50%;">grnYellow</div>
<div class="a t" style="left:475px;top:67.4px;line-height:10px;font-size:6.93px;color:#151515;transform:scaleX(0.9091);transform-origin:0 50%;"><span class="c">获取结果的</span></div>
<svg class="a" style="left:508.3px;top:67.3px" width="8.6" height="8.6" viewBox="0 0 8.6 8.6"><defs><linearGradient id="rg" x1="0" y1="0" x2="0" y2="1"><stop offset="0" stop-color="#e8e8e8"/><stop offset="1" stop-color="#ffffff"/></linearGradient></defs><circle cx="4.3" cy="4.3" r="3.3" fill="#fff" stroke="#a9a6a2" stroke-width="0.7"/></svg>
<div class="a t" style="left:519px;top:67.5px;line-height:10px;font-size:6.93px;color:#151515;transform:scaleX(0.9091);transform-origin:0 50%;"><span class="c">曲线</span></div>
<svg class="a" style="left:536.9px;top:67.3px" width="8.6" height="8.6" viewBox="0 0 8.6 8.6"><defs><linearGradient id="rg" x1="0" y1="0" x2="0" y2="1"><stop offset="0" stop-color="#e8e8e8"/><stop offset="1" stop-color="#ffffff"/></linearGradient></defs><circle cx="4.3" cy="4.3" r="3.3" fill="#fff" stroke="#a9a6a2" stroke-width="0.7"/><circle cx="4.3" cy="4.3" r="1.55" fill="#111"/></svg>
<div class="a t" style="left:546.5px;top:67.5px;line-height:10px;font-size:6.93px;color:#151515;transform:scaleX(0.9091);transform-origin:0 50%;"><span class="c">坐标</span></div>
<div class="a " style="left:565.3px;top:66.3px;width:171.2px;height:10.0px;background:linear-gradient(#47a3e6,#2f8ddb 45%,#2a86d4);border:1px solid #2a78c0;border-radius:2px;box-sizing:border-box;"></div>
<div class="a t" style="left:500.9px;width:300px;text-align:center;top:67.3px;line-height:10px;font-size:6.6px;color:#e8f2fb;transform:scaleX(0.9091);transform-origin:50% 50%;-webkit-text-stroke:0">100%</div>
<div class="a " style="left:475.5px;top:80px;width:261.5px;height:99.5px;background:#fff;border:1px solid #d8d5d1;box-sizing:border-box;"></div>
<div class="a " style="left:476px;top:80.5px;width:253.7px;height:9.8px;background:linear-gradient(#fbfaf8,#f4f2ef 50%,#eae7e3);border-bottom:1px solid #d9d6d2;box-sizing:border-box;"></div>
<div class="a " style="left:484.2px;top:80.5px;width:0.8px;height:9.8px;background:#dedbd7;"></div>
<div class="a " style="left:535.0px;top:80.5px;width:0.8px;height:9.8px;background:#dedbd7;"></div>
<div class="a " style="left:588.2px;top:80.5px;width:0.8px;height:9.8px;background:#dedbd7;"></div>
<div class="a " style="left:638.9px;top:80.5px;width:0.8px;height:9.8px;background:#dedbd7;"></div>
<div class="a " style="left:681.5px;top:80.5px;width:0.8px;height:9.8px;background:#dedbd7;"></div>
<div class="a t" style="left:360.1px;width:300px;text-align:center;top:81.3px;line-height:10px;font-size:7.7px;color:#151515;transform:scaleX(0.9091);transform-origin:50% 50%;"><span class="c">染料</span></div>
<div class="a t" style="left:412.1px;width:300px;text-align:center;top:81.3px;line-height:10px;font-size:7.7px;color:#151515;transform:scaleX(0.9091);transform-origin:50% 50%;"><span class="c">数量</span></div>
<div class="a t" style="left:464.05px;width:300px;text-align:center;top:81.3px;line-height:10px;font-size:7.7px;color:#151515;transform:scaleX(0.9091);transform-origin:50% 50%;"><span class="c">染料</span></div>
<div class="a t" style="left:510.7px;width:300px;text-align:center;top:81.3px;line-height:10px;font-size:7.7px;color:#151515;transform:scaleX(0.9091);transform-origin:50% 50%;"><span class="c">数量</span></div>
<div class="a t" style="left:555.85px;width:300px;text-align:center;top:81.3px;line-height:10px;font-size:7.7px;color:#151515;transform:scaleX(0.9091);transform-origin:50% 50%;">dE*</div>
<div class="a " style="left:476px;top:90.3px;width:8.7px;height:80.7px;background:linear-gradient(90deg,#f5f3f0,#ebe8e4);"></div>
<div class="a " style="left:476px;top:105.4px;width:253.7px;height:0.8px;background:#e8e5e1;"></div>
<div class="a " style="left:476px;top:121.0px;width:253.7px;height:0.8px;background:#e8e5e1;"></div>
<div class="a " style="left:476px;top:136.5px;width:253.7px;height:0.8px;background:#e8e5e1;"></div>
<div class="a " style="left:476px;top:152.0px;width:253.7px;height:0.8px;background:#e8e5e1;"></div>
<div class="a " style="left:476px;top:167.6px;width:253.7px;height:0.8px;background:#e8e5e1;"></div>
<div class="a " style="left:484.2px;top:90.3px;width:0.8px;height:80.7px;background:#e6e3df;"></div>
<div class="a " style="left:535.0px;top:90.3px;width:0.8px;height:80.7px;background:#e6e3df;"></div>
<div class="a " style="left:588.2px;top:90.3px;width:0.8px;height:80.7px;background:#e6e3df;"></div>
<div class="a " style="left:638.9px;top:90.3px;width:0.8px;height:80.7px;background:#e6e3df;"></div>
<div class="a " style="left:681.5px;top:90.3px;width:0.8px;height:80.7px;background:#e6e3df;"></div>
<div class="a t" style="left:330.1px;width:300px;text-align:center;top:93.95px;line-height:10px;font-size:7.92px;color:#151515;transform:scaleX(0.9091);transform-origin:50% 50%;">1</div>
<div class="a t" style="left:487.1px;top:93.95px;line-height:10px;font-size:7.15px;color:#151515;transform:scaleX(0.9091);transform-origin:0 50%;">Blue</div>
<div class="a t" style="left:537.9px;top:93.95px;line-height:10px;font-size:7.15px;color:#151515;transform:scaleX(0.9091);transform-origin:0 50%;">0.0872336</div>
<div class="a t" style="left:591.1px;top:93.95px;line-height:10px;font-size:7.15px;color:#151515;transform:scaleX(0.9091);transform-origin:0 50%;">vioRed</div>
<div class="a t" style="left:641.8px;top:93.95px;line-height:10px;font-size:7.15px;color:#151515;transform:scaleX(0.9091);transform-origin:0 50%;">2.38273</div>
<div class="a t" style="left:684.4px;top:93.95px;line-height:10px;font-size:7.15px;color:#151515;transform:scaleX(0.9091);transform-origin:0 50%;">0.000899016</div>
<div class="a t" style="left:330.1px;width:300px;text-align:center;top:109.5px;line-height:10px;font-size:7.92px;color:#151515;transform:scaleX(0.9091);transform-origin:50% 50%;">2</div>
<div class="a t" style="left:487.1px;top:109.5px;line-height:10px;font-size:7.15px;color:#151515;transform:scaleX(0.9091);transform-origin:0 50%;">mYellow</div>
<div class="a t" style="left:537.9px;top:109.5px;line-height:10px;font-size:7.15px;color:#151515;transform:scaleX(0.9091);transform-origin:0 50%;">15.0165</div>
<div class="a t" style="left:591.1px;top:109.5px;line-height:10px;font-size:7.15px;color:#151515;transform:scaleX(0.9091);transform-origin:0 50%;">vioRed</div>
<div class="a t" style="left:641.8px;top:109.5px;line-height:10px;font-size:7.15px;color:#151515;transform:scaleX(0.9091);transform-origin:0 50%;">2.16297</div>
<div class="a t" style="left:684.4px;top:109.5px;line-height:10px;font-size:7.15px;color:#151515;transform:scaleX(0.9091);transform-origin:0 50%;">0.000918694</div>
<div class="a t" style="left:330.1px;width:300px;text-align:center;top:125.05px;line-height:10px;font-size:7.92px;color:#151515;transform:scaleX(0.9091);transform-origin:50% 50%;">3</div>
<div class="a t" style="left:487.1px;top:125.05px;line-height:10px;font-size:7.15px;color:#151515;transform:scaleX(0.9091);transform-origin:0 50%;">mYellow</div>
<div class="a t" style="left:537.9px;top:125.05px;line-height:10px;font-size:7.15px;color:#151515;transform:scaleX(0.9091);transform-origin:0 50%;">13.662</div>
<div class="a t" style="left:591.1px;top:125.05px;line-height:10px;font-size:7.15px;color:#151515;transform:scaleX(0.9091);transform-origin:0 50%;">Cyan</div>
<div class="a t" style="left:641.8px;top:125.05px;line-height:10px;font-size:7.15px;color:#151515;transform:scaleX(0.9091);transform-origin:0 50%;">1.76792</div>
<div class="a t" style="left:684.4px;top:125.05px;line-height:10px;font-size:7.15px;color:#151515;transform:scaleX(0.9091);transform-origin:0 50%;">0.00100772</div>
<div class="a t" style="left:330.1px;width:300px;text-align:center;top:140.55px;line-height:10px;font-size:7.92px;color:#151515;transform:scaleX(0.9091);transform-origin:50% 50%;">4</div>
<div class="a t" style="left:487.1px;top:140.55px;line-height:10px;font-size:7.15px;color:#151515;transform:scaleX(0.9091);transform-origin:0 50%;">mYellow</div>
<div class="a t" style="left:537.9px;top:140.55px;line-height:10px;font-size:7.15px;color:#151515;transform:scaleX(0.9091);transform-origin:0 50%;">13.7011</div>
<div class="a t" style="left:591.1px;top:140.55px;line-height:10px;font-size:7.15px;color:#151515;transform:scaleX(0.9091);transform-origin:0 50%;">Blue</div>
<div class="a t" style="left:641.8px;top:140.55px;line-height:10px;font-size:7.15px;color:#151515;transform:scaleX(0.9091);transform-origin:0 50%;">0.127265</div>
<div class="a t" style="left:684.4px;top:140.55px;line-height:10px;font-size:7.15px;color:#151515;transform:scaleX(0.9091);transform-origin:0 50%;">0.00110172</div>
<div class="a t" style="left:330.1px;width:300px;text-align:center;top:156.1px;line-height:10px;font-size:7.92px;color:#151515;transform:scaleX(0.9091);transform-origin:50% 50%;">5</div>
<div class="a t" style="left:487.1px;top:156.1px;line-height:10px;font-size:7.15px;color:#151515;transform:scaleX(0.9091);transform-origin:0 50%;">yRed</div>
<div class="a t" style="left:537.9px;top:156.1px;line-height:10px;font-size:7.15px;color:#151515;transform:scaleX(0.9091);transform-origin:0 50%;">1.47787</div>
<div class="a t" style="left:591.1px;top:156.1px;line-height:10px;font-size:7.15px;color:#151515;transform:scaleX(0.9091);transform-origin:0 50%;">mYellow</div>
<div class="a t" style="left:641.8px;top:156.1px;line-height:10px;font-size:7.15px;color:#151515;transform:scaleX(0.9091);transform-origin:0 50%;">13.42</div>
<div class="a t" style="left:684.4px;top:156.1px;line-height:10px;font-size:7.15px;color:#151515;transform:scaleX(0.9091);transform-origin:0 50%;">0.00111653</div>
<div class="a " style="left:729.7px;top:80px;width:7.3px;height:91px;background:#dfdcd8;"></div>
<div class="a " style="left:730.0px;top:86px;width:6.7px;height:20px;background:linear-gradient(90deg,#fbfaf9,#f1efec);border:1px solid #e2dfdb;border-radius:2px;box-sizing:border-box;"></div>
<div class="a " style="left:729.7px;top:80px;width:7.3px;height:7px;background:#f6f5f3;"></div>
<div class="a " style="left:729.7px;top:164px;width:7.3px;height:7px;background:#f6f5f3;"></div>
<svg class="a" style="left:731.15px;top:82.0px" width="4.4" height="3.2" viewBox="0 0 4.4 3.2"><path d="M0 2.7 L4.4 2.7 L2.2 0.5Z" fill="#222"/></svg>
<svg class="a" style="left:731.15px;top:165.8px" width="4.4" height="3.2" viewBox="0 0 4.4 3.2"><path d="M0 0.5 L4.4 0.5 L2.2 2.7Z" fill="#222"/></svg>
<div class="a " style="left:476px;top:171px;width:253.7px;height:7.8px;background:#dfdcd8;"></div>
<div class="a " style="left:569px;top:171.3px;width:87.6px;height:7.2px;background:linear-gradient(#fbfaf9,#f1efec);border:1px solid #e2dfdb;border-radius:2px;box-sizing:border-box;"></div>
<div class="a " style="left:476px;top:171px;width:7px;height:7.8px;background:#f6f5f3;"></div>
<div class="a " style="left:722.7px;top:171px;width:7.0px;height:7.8px;background:#f6f5f3;"></div>
<svg class="a" style="left:478.05px;top:172.8px" width="3.1" height="4.2" viewBox="0 0 3.1 4.2"><path d="M2.6 0 L2.6 4.2 L0.5 2.1Z" fill="#222"/></svg>
<svg class="a" style="left:724.55px;top:172.8px" width="3.1" height="4.2" viewBox="0 0 3.1 4.2"><path d="M0.5 0 L0.5 4.2 L2.6 2.1Z" fill="#222"/></svg>
<div class="a " style="left:729.7px;top:171px;width:7.3px;height:8px;background:#efebe7;"></div>
<div class="a t" style="left:419px;top:184.1px;line-height:10px;font-size:6.93px;color:#151515;transform:scaleX(0.9091);transform-origin:0 50%;"><span class="c">染料数量</span></div>
<div class="a " style="left:447.5px;top:182.5px;width:19.1px;height:10.7px;background:#fff;border:1px solid #cfccc8;border-top-color:#bdbab6;border-radius:2px;box-sizing:border-box;"></div>
<div class="a t" style="left:450px;top:183.8px;line-height:10px;font-size:7.15px;color:#151515;transform:scaleX(0.9091);transform-origin:0 50%;">4</div>
<div class="a " style="left:459px;top:183.2px;width:7px;height:9.4px;background:linear-gradient(#fafafa,#efedea);border-left:1px solid #dcd9d5;box-sizing:border-box;"></div>
<svg class="a" style="left:461.0px;top:184.5px" width="3.2" height="2.6" viewBox="0 0 3.2 2.6"><path d="M0 2.1 L3.2 2.1 L1.6 0.5Z" fill="#222"/></svg>
<svg class="a" style="left:461.0px;top:188.9px" width="3.2" height="2.6" viewBox="0 0 3.2 2.6"><path d="M0 0.5 L3.2 0.5 L1.6 2.1Z" fill="#888"/></svg>
<div class="a " style="left:470.3px;top:182.5px;width:37.3px;height:15.3px;background:linear-gradient(#fcfcfc,#f3f2f0 50%,#e9e7e4);border:1px solid #c9c6c2;border-radius:2px;box-sizing:border-box;"></div>
<div class="a t" style="left:487px;top:186.3px;line-height:10px;font-size:6.93px;color:#151515;transform:scaleX(0.9091);transform-origin:0 50%;"><span class="c">计算</span></div>
<div class="a " style="left:511.3px;top:182.5px;width:49.2px;height:15.3px;background:linear-gradient(#fcfcfc,#f3f2f0 50%,#e9e7e4);border:1px solid #c9c6c2;border-radius:2px;box-sizing:border-box;"></div>
<div class="a t" style="left:528.5px;top:186.3px;line-height:10px;font-size:6.93px;color:#151515;transform:scaleX(0.9091);transform-origin:0 50%;"><span class="c">查看配方</span></div>
<div class="a " style="left:563.7px;top:182.5px;width:49.3px;height:15.3px;background:linear-gradient(#fcfcfc,#f3f2f0 50%,#e9e7e4);border:1px solid #c9c6c2;border-radius:2px;box-sizing:border-box;"></div>
<div class="a t" style="left:580.5px;top:186.3px;line-height:10px;font-size:6.93px;color:#151515;transform:scaleX(0.9091);transform-origin:0 50%;"><span class="c">保存配方</span></div>
<div class="a " style="left:616.5px;top:182.5px;width:67.2px;height:15.3px;background:linear-gradient(#fcfcfc,#f3f2f0 50%,#e9e7e4);border:1px solid #c9c6c2;border-radius:2px;box-sizing:border-box;"></div>
<div class="a t" style="left:634px;top:186.3px;line-height:10px;font-size:6.93px;color:#151515;transform:scaleX(0.9091);transform-origin:0 50%;"><span class="c">保存配方至文本</span></div>
<div class="a " style="left:687.4px;top:182.5px;width:48.6px;height:15.3px;background:linear-gradient(#fcfcfc,#f3f2f0 50%,#e9e7e4);border:1px solid #c9c6c2;border-radius:2px;box-sizing:border-box;"></div>
<div class="a t" style="left:705px;top:186.3px;line-height:10px;font-size:6.93px;color:#151515;transform:scaleX(0.9091);transform-origin:0 50%;"><span class="c">制作试样</span></div>
<svg class="a" style="left:472.6px;top:183.6px" width="13.3" height="13.3" viewBox="0 0 13.3 13.3"><g transform="scale(0.95)"><circle cx="7" cy="4.6" r="3.9" fill="#fff" stroke="#444" stroke-width="0.6"/><circle cx="3.9" cy="8.9" r="3.7" fill="#fff" stroke="#444" stroke-width="0.6"/><circle cx="10.3" cy="8.9" r="3.7" fill="#fff" stroke="#444" stroke-width="0.6"/><path d="M3.4 3.8 A3.9 3.9 0 0 1 10.8 3.4 L8.6 5.8 L5.6 6Z" fill="#4ab0e8"/><path d="M0.9 6.9 A3.7 3.7 0 0 0 4.1 12.6 L4.7 9.3Z" fill="#f09ac0"/><path d="M13.3 7.1 A3.7 3.7 0 0 1 10.3 12.6 L9.9 9.3Z" fill="#f0a030"/><circle cx="7" cy="7.8" r="1" fill="#222"/></g></svg>
<svg class="a" style="left:514px;top:184.5px" width="12" height="12" viewBox="0 0 12 12"><path d="M1 9.5 L6 1.5 L11 1 L10 8Z" fill="#f0b040"/><path d="M1 9.5 L6 1.5 L7.5 6Z" fill="#e05030"/><path d="M1 9.5 L7.5 6 L10 8Z" fill="#f08a30"/><path d="M1 9.5 L4 3 L5 8Z" fill="#c02828"/></svg>
<svg class="a" style="left:566px;top:184.5px" width="13" height="12" viewBox="0 0 13 12"><path d="M0.8 1 H4.6 L5.6 2.4 H11.8 V10 H7.5" fill="none" stroke="#f08040" stroke-width="0.9"/><path d="M0.8 1 V10 H4" fill="none" stroke="#f08040" stroke-width="0.9"/><path d="M5.8 5.5 V11.5 M4 9.6 L5.8 11.6 L7.6 9.6" stroke="#e05030" stroke-width="0.9" fill="none"/></svg>
<svg class="a" style="left:618.5px;top:185px" width="13" height="11" viewBox="0 0 13 11"><rect x="0.5" y="3" width="11" height="7" fill="#f4f4f4" stroke="#444" stroke-width="0.8"/><rect x="2" y="5" width="3" height="1" fill="#333"/><rect x="2" y="7" width="5" height="1" fill="#333"/><path d="M8 4 L11.5 0.5" stroke="#222" stroke-width="1"/><rect x="8" y="5" width="2.5" height="3" fill="#333"/></svg>
<svg class="a" style="left:689.5px;top:183.8px" width="13" height="13" viewBox="0 0 13 13"><circle cx="6.5" cy="6.5" r="6" fill="#152238"/><path d="M3.5 3.5 L8.5 2.8 L9.5 9.5 L4.5 10.2Z" fill="#f4f4f4"/><path d="M3.5 3.5 L6 3.2 L6.8 9.8 L4.5 10.2Z" fill="#20c0e0"/><path d="M6 3.2 L8.5 2.8 L9.5 9.5 L6.8 9.8Z" fill="#f03090"/></svg>
<svg class="a" style="left:8.6px;top:207.8px" width="11" height="11" viewBox="0 0 11 11"><rect x="2.8" y="1.2" width="7.6" height="7.6" fill="#18283c"/><rect x="3.6" y="2.3" width="6" height="4.8" fill="#40607a"/><rect x="4.8" y="3" width="3.2" height="2.6" fill="#c8d8e8"/><rect x="3.6" y="7.2" width="6" height="0.8" fill="#d8a040"/><rect x="0.8" y="1" width="1.5" height="6.8" fill="#4a5a7a"/><ellipse cx="2" cy="9" rx="2" ry="1.4" fill="#f0b010"/></svg>
<div class="a t" style="left:13px;top:223.1px;line-height:10px;font-size:6.93px;color:#151515;transform:scaleX(0.9091);transform-origin:0 50%;"><span class="c">染料文件</span></div>
<div class="a " style="left:13.5px;top:233.5px;width:54.7px;height:10.5px;background:#fff;border:1px solid #cfccc8;border-top-color:#bdbab6;border-radius:2px;box-sizing:border-box;"></div>
<div class="a " style="left:58.2px;top:234.5px;width:0.7px;height:8.5px;background:#dcd9d5;"></div>
<div class="a " style="left:58.9px;top:234.5px;width:8.3px;height:8.5px;background:linear-gradient(#fafafa,#eeedeb);border-radius:0 1px 1px 0;"></div>
<svg class="a" style="left:61.3px;top:237.6px" width="3.8" height="2.9" viewBox="0 0 3.8 2.9"><path d="M0 0.5 L3.8 0.5 L1.9 2.4Z" fill="#222"/></svg>
<div class="a t" style="left:13px;top:247.1px;line-height:10px;font-size:6.93px;color:#151515;transform:scaleX(0.9091);transform-origin:0 50%;"><span class="c">染料名称</span></div>
<div class="a " style="left:13.5px;top:256.7px;width:54.7px;height:11.3px;background:#fff;border:1px solid #cfccc8;border-top-color:#bdbab6;border-radius:2px;box-sizing:border-box;"></div>
<div class="a " style="left:58.2px;top:257.7px;width:0.7px;height:9.3px;background:#dcd9d5;"></div>
<div class="a " style="left:58.9px;top:257.7px;width:8.3px;height:9.3px;background:linear-gradient(#fafafa,#eeedeb);border-radius:0 1px 1px 0;"></div>
<svg class="a" style="left:61.3px;top:261.2px" width="3.8" height="2.9" viewBox="0 0 3.8 2.9"><path d="M0 0.5 L3.8 0.5 L1.9 2.4Z" fill="#222"/></svg>
<div class="a t" style="left:13px;top:270.8px;line-height:10px;font-size:6.93px;color:#151515;transform:scaleX(0.9091);transform-origin:0 50%;"><span class="c">光谱文件</span></div>
<div class="a " style="left:13.5px;top:280.9px;width:54.7px;height:10.4px;background:linear-gradient(#fcfcfc,#f3f2f0 50%,#e9e7e4);border:1px solid #c9c6c2;border-radius:2px;box-sizing:border-box;"></div>
<svg class="a" style="left:60.3px;top:284.95px" width="3.8" height="2.9" viewBox="0 0 3.8 2.9"><path d="M0 0.5 L3.8 0.5 L1.9 2.4Z" fill="#222"/></svg>
<div class="a t" style="left:13px;top:294.1px;line-height:10px;font-size:6.93px;color:#151515;transform:scaleX(0.9091);transform-origin:0 50%;"><span class="c">染料光谱</span></div>
<div class="a " style="left:13.5px;top:304.2px;width:54.7px;height:50.8px;background:#fff;border:1px solid #d6d3cf;box-sizing:border-box;"></div>
<div class="a t" style="left:13px;top:357.2px;line-height:10px;font-size:6.93px;color:#151515;transform:scaleX(0.9091);transform-origin:0 50%;">K <span class="c">平滑处理</span></div>
<div class="a " style="left:13.5px;top:369.3px;width:54.7px;height:9.2px;background:linear-gradient(#fcfcfc,#f3f2f0 50%,#e9e7e4);border:1px solid #c9c6c2;border-radius:2px;box-sizing:border-box;"></div>
<svg class="a" style="left:60.3px;top:372.75px" width="3.8" height="2.9" viewBox="0 0 3.8 2.9"><path d="M0 0.5 L3.8 0.5 L1.9 2.4Z" fill="#222"/></svg>
<div class="a t" style="left:16.0px;top:369.8px;line-height:10px;font-size:6.2px;color:#202020;font-family:'Liberation Mono',monospace;-webkit-text-stroke:0.1px">Linear</div>
<div class="a t" style="left:13px;top:381.5px;line-height:10px;font-size:6.93px;color:#151515;transform:scaleX(0.9091);transform-origin:0 50%;">S <span class="c">平滑处理</span></div>
<div class="a " style="left:13.5px;top:392px;width:54.7px;height:10.2px;background:linear-gradient(#fcfcfc,#f3f2f0 50%,#e9e7e4);border:1px solid #c9c6c2;border-radius:2px;box-sizing:border-box;"></div>
<svg class="a" style="left:60.3px;top:395.95px" width="3.8" height="2.9" viewBox="0 0 3.8 2.9"><path d="M0 0.5 L3.8 0.5 L1.9 2.4Z" fill="#222"/></svg>
<div class="a t" style="left:16.0px;top:393.0px;line-height:10px;font-size:6.2px;color:#202020;font-family:'Liberation Mono',monospace;-webkit-text-stroke:0.1px">Linear</div>
<svg class="a" style="left:13px;top:407.2px" width="8" height="8" viewBox="0 0 8 8"><rect x="0.8" y="0.8" width="6.4" height="6.4" rx="1" fill="#fdfdfd" stroke="#d0cdc9" stroke-width="0.7"/></svg>
<div class="a t" style="left:22.2px;top:407.1px;line-height:10px;font-size:6.93px;color:#151515;transform:scaleX(0.9091);transform-origin:0 50%;"><span class="c">只做平滑处理</span></div>
<svg class="a" style="left:13px;top:419.8px" width="8" height="8" viewBox="0 0 8 8"><rect x="0.8" y="0.8" width="6.4" height="6.4" rx="1" fill="#fdfdfd" stroke="#d0cdc9" stroke-width="0.7"/><path d="M1.2 4.2 L3.1 6.1 L6.6 1.8" fill="none" stroke="#0a0a0a" stroke-width="1.6"/></svg>
<div class="a t" style="left:22.2px;top:419.7px;line-height:10px;font-size:6.93px;color:#151515;transform:scaleX(0.9091);transform-origin:0 50%;"><span class="c">只输入</span> S <span class="c">数值</span></div>
<svg class="a" style="left:13px;top:432px" width="8" height="8" viewBox="0 0 8 8"><rect x="0.8" y="0.8" width="6.4" height="6.4" rx="1" fill="#fdfdfd" stroke="#d0cdc9" stroke-width="0.7"/><path d="M1.2 4.2 L3.1 6.1 L6.6 1.8" fill="none" stroke="#0a0a0a" stroke-width="1.6"/></svg>
<div class="a t" style="left:22.2px;top:431.9px;line-height:10px;font-size:6.93px;color:#151515;transform:scaleX(0.9091);transform-origin:0 50%;"><span class="c">在棕上进行测试</span></div>
<div class="a " style="left:73.4px;top:232.7px;width:195.0px;height:22.8px;background:#ebe8e4;border:1px solid #f6f4f1;box-sizing:border-box;"></div>
<div class="a t" style="left:78px;top:240.2px;line-height:10px;font-size:6.93px;color:#151515;transform:scaleX(0.9091);transform-origin:0 50%;"><span class="c">结果</span></div>
<svg class="a" style="left:93.0px;top:240.0px" width="8.6" height="8.6" viewBox="0 0 8.6 8.6"><defs><linearGradient id="rg" x1="0" y1="0" x2="0" y2="1"><stop offset="0" stop-color="#e8e8e8"/><stop offset="1" stop-color="#ffffff"/></linearGradient></defs><circle cx="4.3" cy="4.3" r="3.3" fill="#fff" stroke="#a9a6a2" stroke-width="0.7"/><circle cx="4.3" cy="4.3" r="1.55" fill="#111"/></svg>
<div class="a t" style="left:103.6px;top:240.2px;line-height:10px;font-size:7.7px;color:#151515;font-family:'Liberation Serif',serif;transform:scaleX(0.9091);transform-origin:0 50%;-webkit-text-stroke:0.1px">K</div>
<svg class="a" style="left:111.7px;top:240.0px" width="8.6" height="8.6" viewBox="0 0 8.6 8.6"><defs><linearGradient id="rg" x1="0" y1="0" x2="0" y2="1"><stop offset="0" stop-color="#e8e8e8"/><stop offset="1" stop-color="#ffffff"/></linearGradient></defs><circle cx="4.3" cy="4.3" r="3.3" fill="#fff" stroke="#a9a6a2" stroke-width="0.7"/></svg>
<div class="a t" style="left:122.3px;top:240.2px;line-height:10px;font-size:7.7px;color:#151515;font-family:'Liberation Serif',serif;transform:scaleX(0.9091);transform-origin:0 50%;-webkit-text-stroke:0.1px">S</div>
<div class="a " style="left:132.8px;top:239.3px;width:40.1px;height:9.3px;background:linear-gradient(#fcfcfc,#f3f2f0 50%,#e9e7e4);border:1px solid #c9c6c2;border-radius:2px;box-sizing:border-box;"></div>
<div class="a t" style="left:2.85px;width:300px;text-align:center;top:239.85px;line-height:10px;font-size:6.93px;color:#151515;transform:scaleX(0.9091);transform-origin:50% 50%;"><span class="c">全部使用</span></div>
<div class="a " style="left:176.4px;top:239.3px;width:40.8px;height:9.3px;background:linear-gradient(#fcfcfc,#f3f2f0 50%,#e9e7e4);border:1px solid #c9c6c2;border-radius:2px;box-sizing:border-box;"></div>
<div class="a t" style="left:46.8px;width:300px;text-align:center;top:239.85px;line-height:10px;font-size:6.93px;color:#151515;transform:scaleX(0.9091);transform-origin:50% 50%;"><span class="c">已被使用</span></div>
<div class="a " style="left:221.2px;top:239.3px;width:41.3px;height:9.3px;background:linear-gradient(#fcfcfc,#f3f2f0 50%,#e9e7e4);border:1px solid #c9c6c2;border-radius:2px;box-sizing:border-box;"></div>
<div class="a t" style="left:91.85px;width:300px;text-align:center;top:239.85px;line-height:10px;font-size:6.93px;color:#151515;transform:scaleX(0.9091);transform-origin:50% 50%;"><span class="c">未被使用</span></div>
<div class="a " style="left:72.7px;top:258.7px;width:330.7px;height:117.5px;background:#fff;border:1px solid #d8d5d1;box-sizing:border-box;"></div>
<div class="a " style="left:73.2px;top:259.2px;width:329.7px;height:10.4px;background:linear-gradient(#fbfaf8,#f4f2ef 50%,#eae7e3);border-bottom:1px solid #d9d6d2;box-sizing:border-box;"></div>
<div class="a " style="left:77.8px;top:259.2px;width:0.8px;height:10.4px;background:#dedbd7;"></div>
<div class="a " style="left:128.9px;top:259.2px;width:0.8px;height:10.4px;background:#dedbd7;"></div>
<div class="a " style="left:181.1px;top:259.2px;width:0.8px;height:10.4px;background:#dedbd7;"></div>
<div class="a " style="left:232.7px;top:259.2px;width:0.8px;height:10.4px;background:#dedbd7;"></div>
<div class="a " style="left:284.1px;top:259.2px;width:0.8px;height:10.4px;background:#dedbd7;"></div>
<div class="a " style="left:336.1px;top:259.2px;width:0.8px;height:10.4px;background:#dedbd7;"></div>
<div class="a " style="left:388.0px;top:259.2px;width:0.8px;height:10.4px;background:#dedbd7;"></div>
<div class="a t" style="left:-46.15px;width:300px;text-align:center;top:260.1px;line-height:10px;font-size:7.7px;color:#151515;transform:scaleX(0.9091);transform-origin:50% 50%;">name</div>
<div class="a t" style="left:5.5px;width:300px;text-align:center;top:260.1px;line-height:10px;font-size:7.7px;color:#151515;transform:scaleX(0.9091);transform-origin:50% 50%;">400nm</div>
<div class="a t" style="left:57.4px;width:300px;text-align:center;top:260.1px;line-height:10px;font-size:7.7px;color:#151515;transform:scaleX(0.9091);transform-origin:50% 50%;">410nm</div>
<div class="a t" style="left:108.9px;width:300px;text-align:center;top:260.1px;line-height:10px;font-size:7.7px;color:#151515;transform:scaleX(0.9091);transform-origin:50% 50%;">420nm</div>
<div class="a t" style="left:160.6px;width:300px;text-align:center;top:260.1px;line-height:10px;font-size:7.7px;color:#151515;transform:scaleX(0.9091);transform-origin:50% 50%;">430nm</div>
<div class="a t" style="left:212.55px;width:300px;text-align:center;top:260.1px;line-height:10px;font-size:7.7px;color:#151515;transform:scaleX(0.9091);transform-origin:50% 50%;">440nm</div>
<div class="a " style="left:73.2px;top:269.6px;width:5.1px;height:77.8px;background:linear-gradient(90deg,#f5f3f0,#ebe8e4);"></div>
<div class="a " style="left:73.2px;top:284.5px;width:329.7px;height:0.8px;background:#e6e3df;"></div>
<div class="a " style="left:73.2px;top:299.8px;width:329.7px;height:0.8px;background:#e6e3df;"></div>
<div class="a " style="left:73.2px;top:315.1px;width:329.7px;height:0.8px;background:#e6e3df;"></div>
<div class="a " style="left:73.2px;top:330.8px;width:329.7px;height:0.8px;background:#e6e3df;"></div>
<div class="a " style="left:73.2px;top:346.6px;width:329.7px;height:0.8px;background:#e6e3df;"></div>
<div class="a " style="left:77.8px;top:269.6px;width:0.8px;height:77.8px;background:#e6e3df;"></div>
<div class="a " style="left:128.9px;top:269.6px;width:0.8px;height:77.8px;background:#e6e3df;"></div>
<div class="a " style="left:181.1px;top:269.6px;width:0.8px;height:77.8px;background:#e6e3df;"></div>
<div class="a " style="left:232.7px;top:269.6px;width:0.8px;height:77.8px;background:#e6e3df;"></div>
<div class="a " style="left:284.1px;top:269.6px;width:0.8px;height:77.8px;background:#e6e3df;"></div>
<div class="a " style="left:336.1px;top:269.6px;width:0.8px;height:77.8px;background:#e6e3df;"></div>
<div class="a " style="left:388.0px;top:269.6px;width:0.8px;height:77.8px;background:#e6e3df;"></div>
<div class="a t" style="left:73.9px;top:273.15px;line-height:10px;font-size:7.04px;color:#151515;transform:scaleX(0.9091);transform-origin:0 50%;">1</div>
<div class="a t" style="left:80.7px;top:273.15px;line-height:10px;font-size:7.15px;color:#151515;transform:scaleX(0.9091);transform-origin:0 50%;">mYellow 50%</div>
<div class="a t" style="left:131.8px;top:273.15px;line-height:10px;font-size:7.15px;color:#151515;transform:scaleX(0.9091);transform-origin:0 50%;">0</div>
<div class="a t" style="left:184.0px;top:273.15px;line-height:10px;font-size:7.15px;color:#151515;transform:scaleX(0.9091);transform-origin:0 50%;">0</div>
<div class="a t" style="left:235.6px;top:273.15px;line-height:10px;font-size:7.15px;color:#151515;transform:scaleX(0.9091);transform-origin:0 50%;">0</div>
<div class="a t" style="left:287.0px;top:273.15px;line-height:10px;font-size:7.15px;color:#151515;transform:scaleX(0.9091);transform-origin:0 50%;">0</div>
<div class="a t" style="left:339.0px;top:273.15px;line-height:10px;font-size:7.15px;color:#151515;transform:scaleX(0.9091);transform-origin:0 50%;">0</div>
<div class="a t" style="left:390.9px;top:273.15px;line-height:10px;font-size:7.15px;color:#151515;transform:scaleX(0.9091);transform-origin:0 50%;">0</div>
<div class="a t" style="left:73.9px;top:288.45px;line-height:10px;font-size:7.04px;color:#151515;transform:scaleX(0.9091);transform-origin:0 50%;">2</div>
<div class="a t" style="left:80.7px;top:288.45px;line-height:10px;font-size:7.15px;color:#151515;transform:scaleX(0.9091);transform-origin:0 50%;">mYellow 10%</div>
<div class="a t" style="left:131.8px;top:288.45px;line-height:10px;font-size:7.15px;color:#151515;transform:scaleX(0.9091);transform-origin:0 50%;">0</div>
<div class="a t" style="left:184.0px;top:288.45px;line-height:10px;font-size:7.15px;color:#151515;transform:scaleX(0.9091);transform-origin:0 50%;">0</div>
<div class="a t" style="left:235.6px;top:288.45px;line-height:10px;font-size:7.15px;color:#151515;transform:scaleX(0.9091);transform-origin:0 50%;">0</div>
<div class="a t" style="left:287.0px;top:288.45px;line-height:10px;font-size:7.15px;color:#151515;transform:scaleX(0.9091);transform-origin:0 50%;">0</div>
<div class="a t" style="left:339.0px;top:288.45px;line-height:10px;font-size:7.15px;color:#151515;transform:scaleX(0.9091);transform-origin:0 50%;">0</div>
<div class="a t" style="left:390.9px;top:288.45px;line-height:10px;font-size:7.15px;color:#151515;transform:scaleX(0.9091);transform-origin:0 50%;">0</div>
<div class="a t" style="left:73.9px;top:303.75px;line-height:10px;font-size:7.04px;color:#151515;transform:scaleX(0.9091);transform-origin:0 50%;">3</div>
<div class="a t" style="left:80.7px;top:303.75px;line-height:10px;font-size:7.15px;color:#151515;transform:scaleX(0.9091);transform-origin:0 50%;">mYellow 99% ...</div>
<div class="a t" style="left:131.8px;top:303.75px;line-height:10px;font-size:7.15px;color:#151515;transform:scaleX(0.9091);transform-origin:0 50%;">N/A</div>
<div class="a t" style="left:184.0px;top:303.75px;line-height:10px;font-size:7.15px;color:#151515;transform:scaleX(0.9091);transform-origin:0 50%;">N/A</div>
<div class="a t" style="left:235.6px;top:303.75px;line-height:10px;font-size:7.15px;color:#151515;transform:scaleX(0.9091);transform-origin:0 50%;">N/A</div>
<div class="a t" style="left:287.0px;top:303.75px;line-height:10px;font-size:7.15px;color:#151515;transform:scaleX(0.9091);transform-origin:0 50%;">N/A</div>
<div class="a t" style="left:339.0px;top:303.75px;line-height:10px;font-size:7.15px;color:#151515;transform:scaleX(0.9091);transform-origin:0 50%;">N/A</div>
<div class="a t" style="left:390.9px;top:303.75px;line-height:10px;font-size:7.15px;color:#151515;transform:scaleX(0.9091);transform-origin:0 50%;">N/A</div>
<div class="a t" style="left:73.9px;top:319.25px;line-height:10px;font-size:7.04px;color:#151515;transform:scaleX(0.9091);transform-origin:0 50%;">4</div>
<div class="a t" style="left:80.7px;top:319.25px;line-height:10px;font-size:7.15px;color:#151515;transform:scaleX(0.9091);transform-origin:0 50%;">mean</div>
<div class="a t" style="left:131.8px;top:319.25px;line-height:10px;font-size:7.15px;color:#151515;transform:scaleX(0.9091);transform-origin:0 50%;">N/A</div>
<div class="a t" style="left:184.0px;top:319.25px;line-height:10px;font-size:7.15px;color:#151515;transform:scaleX(0.9091);transform-origin:0 50%;">N/A</div>
<div class="a t" style="left:235.6px;top:319.25px;line-height:10px;font-size:7.15px;color:#151515;transform:scaleX(0.9091);transform-origin:0 50%;">N/A</div>
<div class="a t" style="left:287.0px;top:319.25px;line-height:10px;font-size:7.15px;color:#151515;transform:scaleX(0.9091);transform-origin:0 50%;">N/A</div>
<div class="a t" style="left:339.0px;top:319.25px;line-height:10px;font-size:7.15px;color:#151515;transform:scaleX(0.9091);transform-origin:0 50%;">N/A</div>
<div class="a t" style="left:390.9px;top:319.25px;line-height:10px;font-size:7.15px;color:#151515;transform:scaleX(0.9091);transform-origin:0 50%;">N/A</div>
<div class="a t" style="left:73.9px;top:335.0px;line-height:10px;font-size:7.04px;color:#151515;transform:scaleX(0.9091);transform-origin:0 50%;">5</div>
<div class="a " style="left:73.2px;top:369px;width:329.7px;height:6.8px;background:#dfdcd8;"></div>
<div class="a " style="left:78px;top:369.3px;width:59px;height:6.2px;background:linear-gradient(#fbfaf9,#f1efec);border:1px solid #e2dfdb;border-radius:2px;box-sizing:border-box;"></div>
<div class="a " style="left:73.2px;top:369px;width:7.0px;height:6.8px;background:#f6f5f3;"></div>
<div class="a " style="left:395.9px;top:369px;width:7.0px;height:6.8px;background:#f6f5f3;"></div>
<svg class="a" style="left:75.25px;top:370.3px" width="3.1" height="4.2" viewBox="0 0 3.1 4.2"><path d="M2.6 0 L2.6 4.2 L0.5 2.1Z" fill="#222"/></svg>
<svg class="a" style="left:397.75px;top:370.3px" width="3.1" height="4.2" viewBox="0 0 3.1 4.2"><path d="M0.5 0 L0.5 4.2 L2.6 2.1Z" fill="#222"/></svg>
<div class="a t" style="left:72.9px;top:381.8px;line-height:10px;font-size:6.93px;color:#151515;transform:scaleX(0.9091);transform-origin:0 50%;"><span class="c">染料</span></div>
<div class="a t" style="left:112.6px;top:381.8px;line-height:10px;font-size:6.93px;color:#151515;transform:scaleX(0.9091);transform-origin:0 50%;"><span class="c">浓度</span></div>
<div class="a t" style="left:141px;top:381.8px;line-height:10px;font-size:6.93px;color:#151515;transform:scaleX(0.9091);transform-origin:0 50%;"><span class="c">价格</span></div>
<div class="a " style="left:186.3px;top:381.8px;width:40.8px;height:9.5px;background:linear-gradient(#fcfcfc,#f3f2f0 50%,#e9e7e4);border:1px solid #c9c6c2;border-radius:2px;box-sizing:border-box;"></div>
<div class="a t" style="left:56.7px;width:300px;text-align:center;top:382.45px;line-height:10px;font-size:6px;color:#151515;font-family:'Liberation Mono',monospace;-webkit-text-stroke:0.1px">K1</div>
<div class="a " style="left:72.9px;top:396.5px;width:35.9px;height:11.4px;background:linear-gradient(#fcfcfc,#f3f2f0 50%,#e9e7e4);border:1px solid #c9c6c2;border-radius:2px;box-sizing:border-box;"></div>
<svg class="a" style="left:100.9px;top:401.05px" width="3.8" height="2.9" viewBox="0 0 3.8 2.9"><path d="M0 0.5 L3.8 0.5 L1.9 2.4Z" fill="#222"/></svg>
<div class="a " style="left:112.2px;top:396.5px;width:25.8px;height:11.4px;background:#fff;border:1px solid #cfccc8;border-top-color:#bdbab6;border-radius:2px;box-sizing:border-box;"></div>
<div class="a t" style="left:114.7px;top:398.1px;line-height:10px;font-size:6px;color:#202020;font-family:'Liberation Mono',monospace;-webkit-text-stroke:0.1px">100</div>
<div class="a " style="left:141.4px;top:396.5px;width:41.1px;height:11.4px;background:#fff;border:1px solid #cfccc8;border-top-color:#bdbab6;border-radius:2px;box-sizing:border-box;"></div>
<div class="a t" style="left:143.9px;top:398.1px;line-height:10px;font-size:7.04px;color:#202020;transform:scaleX(0.9091);transform-origin:0 50%;">0</div>
<div class="a " style="left:186.3px;top:396.5px;width:40.8px;height:11.4px;background:#fff;border:1px solid #cfccc8;border-top-color:#bdbab6;border-radius:2px;box-sizing:border-box;"></div>
<div class="a t" style="left:188.8px;top:398.1px;line-height:10px;font-size:6px;color:#202020;font-family:'Liberation Mono',monospace;-webkit-text-stroke:0.1px">0.19065</div>
<div class="a t" style="left:72.9px;top:413.9px;line-height:10px;font-size:6.93px;color:#151515;transform:scaleX(0.9091);transform-origin:0 50%;"><span class="c">混合染料</span></div>
<div class="a t" style="left:112.6px;top:413.9px;line-height:10px;font-size:6.93px;color:#151515;transform:scaleX(0.9091);transform-origin:0 50%;"><span class="c">浓度</span></div>
<div class="a " style="left:141.4px;top:413.1px;width:41.1px;height:9.5px;background:linear-gradient(#fcfcfc,#f3f2f0 50%,#e9e7e4);border:1px solid #c9c6c2;border-radius:2px;box-sizing:border-box;"></div>
<div class="a t" style="left:11.95px;width:300px;text-align:center;top:413.75px;line-height:10px;font-size:6px;color:#151515;font-family:'Liberation Mono',monospace;-webkit-text-stroke:0.1px">KMS</div>
<div class="a " style="left:186.3px;top:413.1px;width:40.8px;height:9.5px;background:linear-gradient(#fcfcfc,#f3f2f0 50%,#e9e7e4);border:1px solid #c9c6c2;border-radius:2px;box-sizing:border-box;"></div>
<div class="a t" style="left:56.7px;width:300px;text-align:center;top:413.75px;line-height:10px;font-size:6.93px;color:#151515;transform:scaleX(0.9091);transform-origin:50% 50%;"><span class="c">核实</span></div>
<div class="a " style="left:72.9px;top:428.3px;width:35.9px;height:10.2px;background:linear-gradient(#fcfcfc,#f3f2f0 50%,#e9e7e4);border:1px solid #c9c6c2;border-radius:2px;box-sizing:border-box;"></div>
<svg class="a" style="left:100.9px;top:432.25px" width="3.8" height="2.9" viewBox="0 0 3.8 2.9"><path d="M0 0.5 L3.8 0.5 L1.9 2.4Z" fill="#222"/></svg>
<div class="a " style="left:112.2px;top:428.3px;width:25.8px;height:10.2px;background:#f0eeeb;border:1px solid #d6d3cf;border-radius:2px;box-sizing:border-box;"></div>
<div class="a t" style="left:113.5px;top:429.3px;line-height:10px;font-size:5.6px;color:#b8b5b1;font-family:'Liberation Mono',monospace;-webkit-text-stroke:0">3S1Te-6</div>
<div class="a " style="left:141.4px;top:428.3px;width:41.1px;height:10.0px;background:linear-gradient(#fcfcfc,#f3f2f0 50%,#e9e7e4);border:1px solid #c9c6c2;border-radius:2px;box-sizing:border-box;"></div>
<div class="a t" style="left:11.95px;width:300px;text-align:center;top:429.2px;line-height:10px;font-size:6.93px;color:#151515;transform:scaleX(0.9091);transform-origin:50% 50%;"><span class="c">清除</span></div>
<div class="a " style="left:186.3px;top:428.3px;width:40.8px;height:10.0px;background:linear-gradient(#fcfcfc,#f3f2f0 50%,#e9e7e4);border:1px solid #c9c6c2;border-radius:2px;box-sizing:border-box;"></div>
<div class="a t" style="left:56.7px;width:300px;text-align:center;top:429.2px;line-height:10px;font-size:6.93px;color:#151515;transform:scaleX(0.9091);transform-origin:50% 50%;"><span class="c">保存</span></div>
<div class="a t" style="left:230px;top:380.3px;line-height:10px;font-size:6.93px;color:#151515;transform:scaleX(0.9091);transform-origin:0 50%;"><span class="c">类别</span></div>
<div class="a " style="left:231.2px;top:389.3px;width:37.0px;height:51.1px;background:#ebe8e4;border:1px solid #f6f4f1;box-sizing:border-box;"></div>
<svg class="a" style="left:235.5px;top:396.1px" width="8.6" height="8.6" viewBox="0 0 8.6 8.6"><defs><linearGradient id="rg" x1="0" y1="0" x2="0" y2="1"><stop offset="0" stop-color="#e8e8e8"/><stop offset="1" stop-color="#ffffff"/></linearGradient></defs><circle cx="4.3" cy="4.3" r="3.3" fill="#fff" stroke="#a9a6a2" stroke-width="0.7"/></svg>
<div class="a t" style="left:246.5px;top:396.3px;line-height:10px;font-size:6.93px;color:#151515;transform:scaleX(0.9091);transform-origin:0 50%;"><span class="c">白色</span></div>
<svg class="a" style="left:235.5px;top:409.7px" width="8.6" height="8.6" viewBox="0 0 8.6 8.6"><defs><linearGradient id="rg" x1="0" y1="0" x2="0" y2="1"><stop offset="0" stop-color="#e8e8e8"/><stop offset="1" stop-color="#ffffff"/></linearGradient></defs><circle cx="4.3" cy="4.3" r="3.3" fill="#fff" stroke="#a9a6a2" stroke-width="0.7"/></svg>
<div class="a t" style="left:246.5px;top:409.9px;line-height:10px;font-size:6.93px;color:#151515;transform:scaleX(0.9091);transform-origin:0 50%;"><span class="c">黑色</span></div>
<svg class="a" style="left:235.5px;top:423.3px" width="8.6" height="8.6" viewBox="0 0 8.6 8.6"><defs><linearGradient id="rg" x1="0" y1="0" x2="0" y2="1"><stop offset="0" stop-color="#e8e8e8"/><stop offset="1" stop-color="#ffffff"/></linearGradient></defs><circle cx="4.3" cy="4.3" r="3.3" fill="#fff" stroke="#a9a6a2" stroke-width="0.7"/><circle cx="4.3" cy="4.3" r="1.55" fill="#111"/></svg>
<div class="a t" style="left:246.5px;top:423.5px;line-height:10px;font-size:6.93px;color:#151515;transform:scaleX(0.9091);transform-origin:0 50%;"><span class="c">其他</span></div>
<div class="a " style="left:271.9px;top:389.3px;width:108.7px;height:51.1px;background:#ebe8e4;border:1px solid #f6f4f1;box-sizing:border-box;"></div>
<div class="a " style="left:277.3px;top:395.5px;width:97.1px;height:10.4px;background:#fff;border:1px solid #cfccc8;border-top-color:#bdbab6;border-radius:2px;box-sizing:border-box;"></div>
<div class="a t" style="left:279.8px;top:396.6px;line-height:10px;font-size:5.6px;color:#9a9794;font-family:'Liberation Mono',monospace;-webkit-text-stroke:0">std_index</div>
<div class="a " style="left:277.3px;top:409.6px;width:97.1px;height:10.6px;background:#fff;border:1px solid #cfccc8;border-top-color:#bdbab6;border-radius:2px;box-sizing:border-box;"></div>
<div class="a t" style="left:279.8px;top:410.8px;line-height:10px;font-size:5.6px;color:#9a9794;font-family:'Liberation Mono',monospace;-webkit-text-stroke:0">smp_index</div>
<div class="a " style="left:277.3px;top:423.9px;width:97.1px;height:10.4px;background:linear-gradient(#fcfcfc,#f3f2f0 50%,#e9e7e4);border:1px solid #c9c6c2;border-radius:2px;box-sizing:border-box;"></div>
<div class="a t" style="left:175.85px;width:300px;text-align:center;top:425.0px;line-height:10px;font-size:5.8px;color:#151515;font-family:'Liberation Mono',monospace;-webkit-text-stroke:0.1px">Auto Fitting</div>
<svg class="a" style="left:414.5px;top:207.8px" width="10" height="10" viewBox="0 0 10 10"><path d="M6 6 L9.2 9.2" stroke="#1a70b8" stroke-width="1.7" stroke-linecap="round"/><circle cx="4" cy="4" r="3" fill="#fff" stroke="#6a3a22" stroke-width="1.3"/></svg>
<div class="a t" style="left:419px;top:222.4px;line-height:10px;font-size:6.93px;color:#151515;transform:scaleX(0.9091);transform-origin:0 50%;"><span class="c">文件类型</span></div>
<div class="a " style="left:419.4px;top:233px;width:52.6px;height:10.1px;background:linear-gradient(#fcfcfc,#f3f2f0 50%,#e9e7e4);border:1px solid #c9c6c2;border-radius:2px;box-sizing:border-box;"></div>
<svg class="a" style="left:464.1px;top:236.9px" width="3.8" height="2.9" viewBox="0 0 3.8 2.9"><path d="M0 0.5 L3.8 0.5 L1.9 2.4Z" fill="#222"/></svg>
<div class="a t" style="left:421.9px;top:233.95px;line-height:10px;font-size:6.93px;color:#202020;transform:scaleX(0.9091);transform-origin:0 50%;"><span class="c">光谱</span></div>
<div class="a t" style="left:419px;top:246.6px;line-height:10px;font-size:6.93px;color:#151515;transform:scaleX(0.9091);transform-origin:0 50%;"><span class="c">文件</span></div>
<div class="a " style="left:419.4px;top:256.7px;width:52.6px;height:10.3px;background:linear-gradient(#fcfcfc,#f3f2f0 50%,#e9e7e4);border:1px solid #c9c6c2;border-radius:2px;box-sizing:border-box;"></div>
<svg class="a" style="left:464.1px;top:260.7px" width="3.8" height="2.9" viewBox="0 0 3.8 2.9"><path d="M0 0.5 L3.8 0.5 L1.9 2.4Z" fill="#222"/></svg>
<div class="a t" style="left:421.9px;top:257.75px;line-height:10px;font-size:5.1px;color:#202020;font-family:'Liberation Mono',monospace;-webkit-text-stroke:0.1px">chongzhi20190</div>
<div class="a t" style="left:476px;top:222.4px;line-height:10px;font-size:6.93px;color:#151515;transform:scaleX(0.9091);transform-origin:0 50%;"><span class="c">拖动光谱至此</span></div>
<div class="a " style="left:475.3px;top:232.9px;width:262.9px;height:10.3px;background:#fff;border:1px solid #cfccc8;border-top-color:#bdbab6;border-radius:2px;box-sizing:border-box;"></div>
<div class="a t" style="left:477.8px;top:233.95px;line-height:10px;font-size:5.8px;color:#202020;font-family:'Liberation Mono',monospace;-webkit-text-stroke:0.1px">yRed 50%</div>
<div class="a t" style="left:476px;top:246.6px;line-height:10px;font-size:6.93px;color:#151515;transform:scaleX(0.9091);transform-origin:0 50%;"><span class="c">记录</span></div>
<div class="a " style="left:475.8px;top:256px;width:263.9px;height:169.6px;background:#ebe8e4;border:1px solid #e2dfdb;box-sizing:border-box;"></div>
<div class="a " style="left:479.3px;top:258.6px;width:257.7px;height:163.8px;background:#fff;border:1px solid #dcd9d5;box-sizing:border-box;"></div>
<div class="a" style="left:480px;top:259.2px;width:248px;height:162.6px;overflow:hidden">
<div class="a t" style="left:1.2px;top:0.3px;line-height:10px;font-size:7.15px;color:#151515;transform:scaleX(0.909);transform-origin:0 50%">yRed 50%</div>
<div class="a t" style="left:1.2px;top:9.08px;line-height:10px;font-size:7.15px;color:#151515;transform:scaleX(0.909);transform-origin:0 50%">yRed 100%</div>
<div class="a t" style="left:1.2px;top:17.86px;line-height:10px;font-size:7.15px;color:#151515;transform:scaleX(0.909);transform-origin:0 50%">yRed 99%+Black 1%</div>
<div class="a t" style="left:1.2px;top:26.64px;line-height:10px;font-size:7.15px;color:#151515;transform:scaleX(0.909);transform-origin:0 50%">yRed 10%</div>
<div class="a t" style="left:1.2px;top:35.42px;line-height:10px;font-size:7.15px;color:#151515;transform:scaleX(0.909);transform-origin:0 50%">vioRed 100%</div>
<div class="a t" style="left:1.2px;top:44.2px;line-height:10px;font-size:7.15px;color:#151515;transform:scaleX(0.909);transform-origin:0 50%">vioRed 50%</div>
<div class="a t" style="left:1.2px;top:52.98px;line-height:10px;font-size:7.15px;color:#151515;transform:scaleX(0.909);transform-origin:0 50%">vioRed 99% + black 1%</div>
<div class="a t" style="left:1.2px;top:61.76px;line-height:10px;font-size:7.15px;color:#151515;transform:scaleX(0.909);transform-origin:0 50%">vioRed 10%</div>
<div class="a t" style="left:1.2px;top:70.54px;line-height:10px;font-size:7.15px;color:#151515;transform:scaleX(0.909);transform-origin:0 50%">mYellow 99% + black 1%</div>
<div class="a t" style="left:1.2px;top:79.32px;line-height:10px;font-size:7.15px;color:#151515;transform:scaleX(0.909);transform-origin:0 50%">black 10%</div>
<div class="a t" style="left:1.2px;top:88.1px;line-height:10px;font-size:7.15px;color:#151515;transform:scaleX(0.909);transform-origin:0 50%">black 50%</div>
<div class="a t" style="left:1.2px;top:96.88px;line-height:10px;font-size:7.15px;color:#151515;transform:scaleX(0.909);transform-origin:0 50%">mYellow 100%</div>
<div class="a t" style="left:1.2px;top:105.66px;line-height:10px;font-size:7.15px;color:#151515;transform:scaleX(0.909);transform-origin:0 50%">black 100%</div>
<div class="a t" style="left:1.2px;top:114.44px;line-height:10px;font-size:7.15px;color:#151515;transform:scaleX(0.909);transform-origin:0 50%">mYellow 10%</div>
<div class="a t" style="left:1.2px;top:123.22px;line-height:10px;font-size:7.15px;color:#151515;transform:scaleX(0.909);transform-origin:0 50%">mYellow 50%</div>
<div class="a t" style="left:1.2px;top:132.0px;line-height:10px;font-size:7.15px;color:#151515;transform:scaleX(0.909);transform-origin:0 50%">grnYellow 99% + black 1%</div>
<div class="a t" style="left:1.2px;top:140.78px;line-height:10px;font-size:7.15px;color:#151515;transform:scaleX(0.909);transform-origin:0 50%">Cyan 100%</div>
<div class="a t" style="left:1.2px;top:149.56px;line-height:10px;font-size:7.15px;color:#151515;transform:scaleX(0.909);transform-origin:0 50%">Blue 100%</div>
<div class="a t" style="left:1.2px;top:158.34px;line-height:10px;font-size:7.15px;color:#151515;transform:scaleX(0.909);transform-origin:0 50%">white</div>
</div>
<div class="a " style="left:728.9px;top:259.2px;width:6.7px;height:162.6px;background:#dfdcd8;"></div>
<div class="a " style="left:729.2px;top:264.5px;width:6.1px;height:104.9px;background:linear-gradient(90deg,#fbfaf9,#f1efec);border:1px solid #e2dfdb;border-radius:2px;box-sizing:border-box;"></div>
<div class="a " style="left:728.9px;top:259.2px;width:6.7px;height:7.0px;background:#f6f5f3;"></div>
<div class="a " style="left:728.9px;top:414.8px;width:6.7px;height:7.0px;background:#f6f5f3;"></div>
<svg class="a" style="left:730.05px;top:261.2px" width="4.4" height="3.2" viewBox="0 0 4.4 3.2"><path d="M0 2.7 L4.4 2.7 L2.2 0.5Z" fill="#222"/></svg>
<svg class="a" style="left:730.05px;top:416.6px" width="4.4" height="3.2" viewBox="0 0 4.4 3.2"><path d="M0 0.5 L4.4 0.5 L2.2 2.7Z" fill="#222"/></svg>
<div class="a " style="left:728.9px;top:259.2px;width:6.7px;height:162.6px;background:transparent;border-left:1px solid #e8e5e1;box-sizing:border-box;"></div>
<div class="a t" style="left:419px;top:370.2px;line-height:10px;font-size:6.93px;color:#151515;transform:scaleX(0.9091);transform-origin:0 50%;"><span class="c">标准</span></div>
<div class="a " style="left:419.7px;top:379.5px;width:52.8px;height:46.7px;background:#ebe8e4;border:1px solid #f6f4f1;box-sizing:border-box;"></div>
<svg class="a" style="left:424.6px;top:385.2px" width="8.6" height="8.6" viewBox="0 0 8.6 8.6"><defs><linearGradient id="rg" x1="0" y1="0" x2="0" y2="1"><stop offset="0" stop-color="#e8e8e8"/><stop offset="1" stop-color="#ffffff"/></linearGradient></defs><circle cx="4.3" cy="4.3" r="3.3" fill="#fff" stroke="#a9a6a2" stroke-width="0.7"/><circle cx="4.3" cy="4.3" r="1.55" fill="#111"/></svg>
<div class="a t" style="left:434.5px;top:385.4px;line-height:10px;font-size:5.6px;color:#151515;font-family:'Liberation Mono',monospace;-webkit-text-stroke:0.1px">dE*</div>
<svg class="a" style="left:424.6px;top:397.7px" width="8.6" height="8.6" viewBox="0 0 8.6 8.6"><defs><linearGradient id="rg" x1="0" y1="0" x2="0" y2="1"><stop offset="0" stop-color="#e8e8e8"/><stop offset="1" stop-color="#ffffff"/></linearGradient></defs><circle cx="4.3" cy="4.3" r="3.3" fill="#fff" stroke="#a9a6a2" stroke-width="0.7"/></svg>
<div class="a t" style="left:434.5px;top:397.9px;line-height:10px;font-size:5.4px;color:#151515;font-family:'Liberation Mono',monospace;-webkit-text-stroke:0.1px">GeoMi</div>
<div class="a " style="left:425.4px;top:410.1px;width:41.0px;height:10.1px;background:linear-gradient(#fcfcfc,#f3f2f0 50%,#e9e7e4);border:1px solid #c9c6c2;border-radius:2px;box-sizing:border-box;"></div>
<div class="a t" style="left:295.9px;width:300px;text-align:center;top:411.05px;line-height:10px;font-size:6.93px;color:#151515;transform:scaleX(0.9091);transform-origin:50% 50%;"><span class="c">搜索</span></div>
<div class="a " style="left:419.7px;top:429.7px;width:52.8px;height:9.8px;background:linear-gradient(#fcfcfc,#f3f2f0 50%,#e9e7e4);border:1px solid #c9c6c2;border-radius:2px;box-sizing:border-box;"></div>
<div class="a t" style="left:296.1px;width:300px;text-align:center;top:430.5px;line-height:10px;font-size:6.93px;color:#151515;transform:scaleX(0.9091);transform-origin:50% 50%;"><span class="c">确认</span></div>
<div class="a " style="left:476px;top:429.8px;width:262.6px;height:9.8px;background:linear-gradient(#fcfcfc,#f3f2f0 50%,#e9e7e4);border:1px solid #c9c6c2;border-radius:2px;box-sizing:border-box;"></div>
<div class="a t" style="left:457.3px;width:300px;text-align:center;top:430.6px;line-height:10px;font-size:6.93px;color:#151515;transform:scaleX(0.9091);transform-origin:50% 50%;"><span class="c">取消</span></div>
</body></html>
